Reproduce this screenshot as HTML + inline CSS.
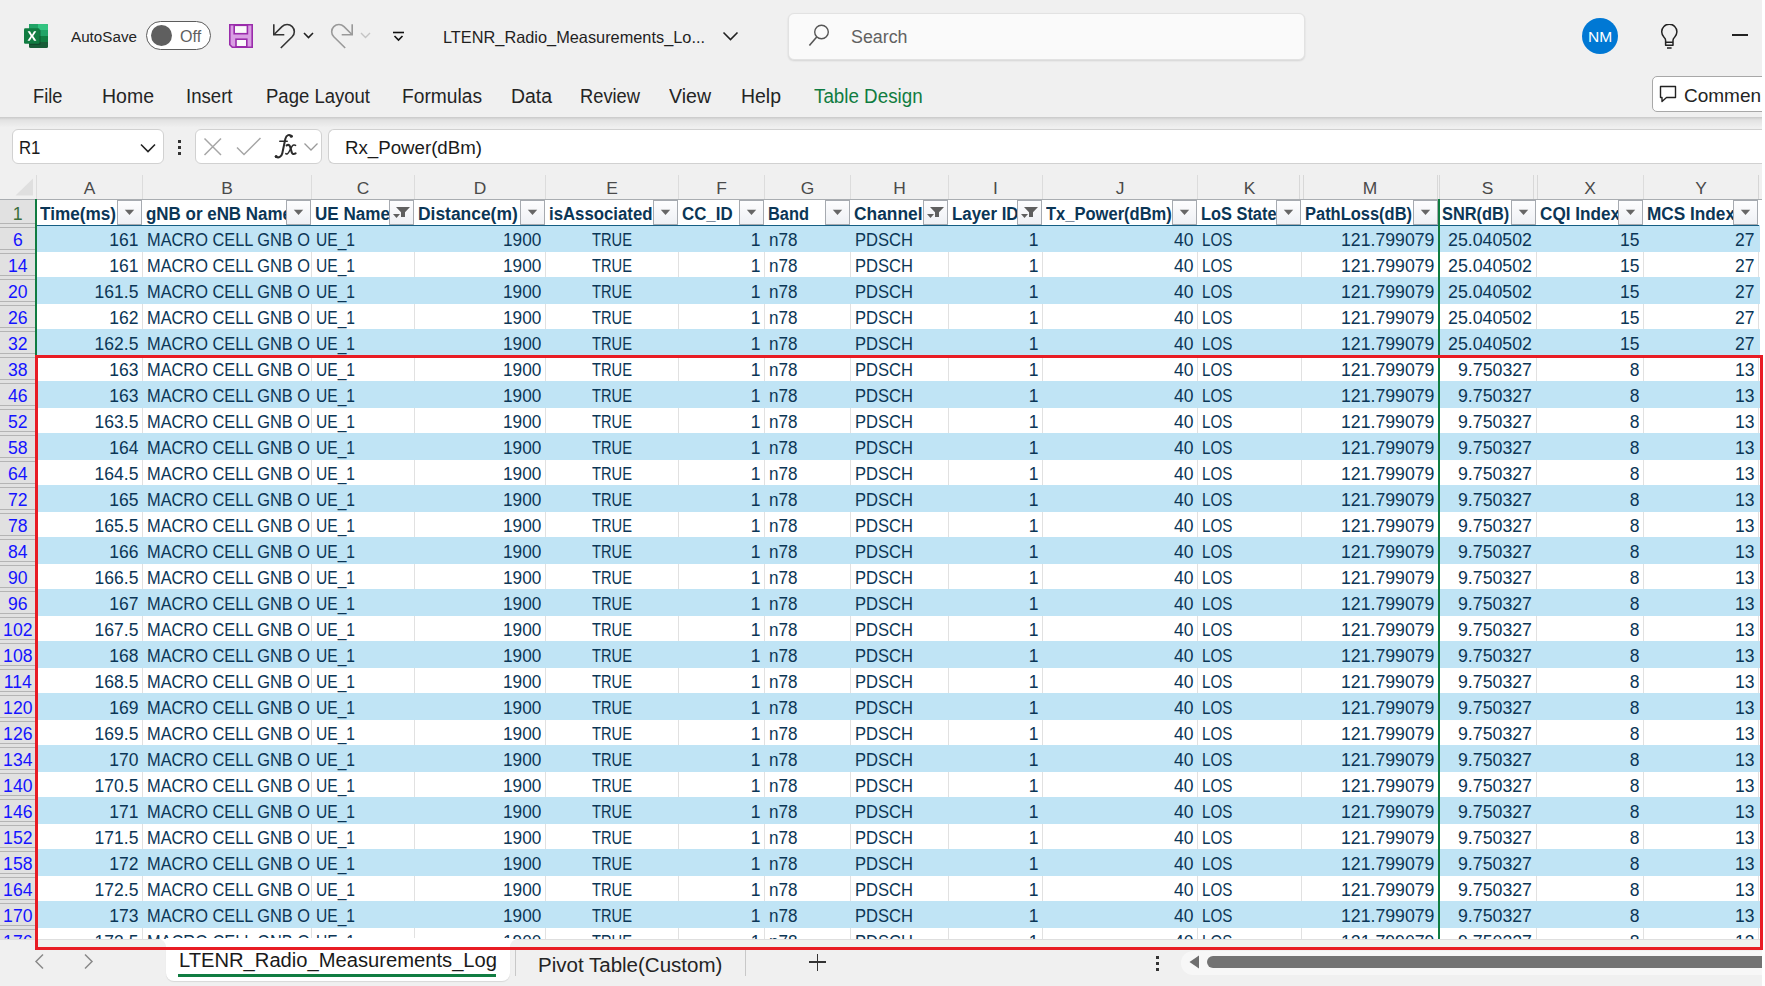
<!DOCTYPE html>
<html><head><meta charset="utf-8"><style>
html,body{margin:0;padding:0;}
body{width:1765px;height:986px;overflow:hidden;position:relative;background:#f0f0f0;font-family:'Liberation Sans', sans-serif;}
div{box-sizing:border-box;}
</style></head><body>
<div style="position:absolute;left:1762px;top:0;width:3px;height:986px;background:#fff"></div><svg style="position:absolute;left:24px;top:24px" width="24" height="24" viewBox="0 0 24 24">
<rect x="5" y="0" width="19" height="24" rx="1.5" fill="#185c37"/>
<path d="M5 0h17.5a1.5 1.5 0 0 1 1.5 1.5V6H5z" fill="#21a366"/>
<path d="M14 0h8.5A1.5 1.5 0 0 1 24 1.5V6H14z" fill="#33c481"/>
<rect x="5" y="6" width="19" height="6" fill="#107c41"/>
<rect x="14" y="6" width="10" height="6" fill="#21a366"/>
<rect x="5" y="12" width="19" height="6" fill="#185c37"/>
<rect x="14" y="12" width="10" height="6" fill="#107c41"/>
<rect x="5" y="5.5" width="11.5" height="15.5" rx="1.3" fill="#0b3d22" opacity="0.55"/>
<rect x="0" y="4.2" width="15.5" height="15.5" rx="1.3" fill="#107c41"/>
<path d="M3.6 7.2h2.4l2 3.5 2-3.5h2.3l-3.1 4.7 3.2 4.8h-2.4l-2.1-3.5-2.1 3.5H3.5l3.2-4.8z" fill="#fff"/>
</svg><div style="position:absolute;left:71.00px;top:29.38px;font-size:15.5px;line-height:15.5px;font-weight:400;color:#242424;white-space:pre;transform:scaleX(0.9819);transform-origin:0 0;">AutoSave</div><div style="position:absolute;left:146px;top:21px;width:65px;height:29px;border:1px solid #5c5c5c;border-radius:15px;background:#fff"></div><div style="position:absolute;left:151px;top:25px;width:21px;height:21px;border-radius:50%;background:#5f5f5f"></div><div style="position:absolute;left:179.50px;top:28.96px;font-size:16px;line-height:16px;font-weight:400;color:#5f5f5f;white-space:pre;transform:scaleX(1.0073);transform-origin:0 0;">Off</div><svg style="position:absolute;left:229px;top:24px" width="24" height="24" viewBox="0 0 24 24">
<path d="M0.8 0.8h22.4v22.4H3.3L0.8 20.7z" fill="#d99ee3" stroke="#9a2cab" stroke-width="1.6"/>
<rect x="5.2" y="1.3" width="13.2" height="8.4" fill="#fafafa" stroke="#9a2cab" stroke-width="1.6"/>
<rect x="7" y="15.2" width="10.8" height="7.6" fill="#fafafa" stroke="#9a2cab" stroke-width="1.6"/>
</svg><svg style="position:absolute;left:272px;top:23px" width="26" height="26" viewBox="0 0 26 26">
<path d="M1.8 1.2v10.5h10.5" fill="none" stroke="#333" stroke-width="1.6"/>
<path d="M2.3 11.2 L10 3.6 a7.2 7.2 0 0 1 10.2 10.2 L8.8 25" fill="none" stroke="#333" stroke-width="1.6"/>
</svg><svg style="position:absolute;left:303px;top:32px" width="11" height="7" viewBox="0 0 11 7"><path d="M1 1l4.5 4.5L10 1" fill="none" stroke="#222" stroke-width="1.6"/></svg><svg style="position:absolute;left:327.5px;top:23px" width="26" height="26" viewBox="0 0 26 26">
<path d="M24.2 1.2v10.5H13.7" fill="none" stroke="#999" stroke-width="1.6"/>
<path d="M23.7 11.2 L16 3.6 a7.2 7.2 0 0 0 -10.2 10.2 L17.2 25" fill="none" stroke="#999" stroke-width="1.6"/>
</svg><svg style="position:absolute;left:360px;top:32px" width="11" height="7" viewBox="0 0 11 7"><path d="M1 1l4.5 4.5L10 1" fill="none" stroke="#c4c4c4" stroke-width="1.4"/></svg><svg style="position:absolute;left:392px;top:31px" width="13" height="11" viewBox="0 0 13 11"><path d="M1 1.5h11" stroke="#111" stroke-width="1.6"/><path d="M2.5 5l4 4 4-4" fill="none" stroke="#111" stroke-width="1.6"/></svg><div style="position:absolute;left:443.00px;top:29.03px;font-size:16.5px;line-height:16.5px;font-weight:400;color:#1f1f1f;white-space:pre;transform:scaleX(0.9896);transform-origin:0 0;">LTENR_Radio_Measurements_Lo...</div><svg style="position:absolute;left:722px;top:31px" width="17" height="11" viewBox="0 0 17 11"><path d="M1.5 1.5l7 7 7-7" fill="none" stroke="#222" stroke-width="1.6"/></svg><div style="position:absolute;left:788px;top:13px;width:517px;height:47px;background:#fafafa;border:1px solid #e2e2e2;border-radius:6px;box-shadow:0 1px 2px rgba(0,0,0,0.12)"></div><svg style="position:absolute;left:808px;top:23px" width="22" height="24" viewBox="0 0 22 24"><circle cx="13.5" cy="9" r="6.8" fill="none" stroke="#555" stroke-width="1.4"/><path d="M8.7 14l-7.3 8.5" stroke="#555" stroke-width="1.6"/></svg><div style="position:absolute;left:850.50px;top:29.19px;font-size:17.5px;line-height:17.5px;font-weight:400;color:#616161;white-space:pre;transform:scaleX(1.0189);transform-origin:0 0;">Search</div><div style="position:absolute;left:1582px;top:18px;width:36px;height:36px;border-radius:50%;background:#0078d4"></div><div style="position:absolute;left:1588.20px;top:29.15px;font-size:15.3px;line-height:15.3px;font-weight:400;color:#ffffff;white-space:pre;transform:scaleX(1.0169);transform-origin:0 0;">NM</div><svg style="position:absolute;left:1658px;top:24px" width="22" height="26" viewBox="0 0 22 26">
<path d="M7.6 21.2V16.2c0-1-.5-1.9-1.6-3a7.6 7.6 0 1 1 10.6 0c-1.1 1.1-1.6 2-1.6 3v5z" fill="none" stroke="#222" stroke-width="1.5" stroke-linejoin="round"/>
<path d="M7.6 18.2h7.4M9 24h4.6" stroke="#222" stroke-width="1.5"/></svg><div style="position:absolute;left:1732px;top:34px;width:16px;height:2px;background:#222"></div><div style="position:absolute;left:32.50px;top:86.37px;font-size:20px;line-height:20px;font-weight:400;color:#242424;white-space:pre;transform:scaleX(0.9121);transform-origin:0 0;">File</div><div style="position:absolute;left:101.60px;top:86.37px;font-size:20px;line-height:20px;font-weight:400;color:#242424;white-space:pre;transform:scaleX(0.9745);transform-origin:0 0;">Home</div><div style="position:absolute;left:185.50px;top:86.37px;font-size:20px;line-height:20px;font-weight:400;color:#242424;white-space:pre;transform:scaleX(0.9294);transform-origin:0 0;">Insert</div><div style="position:absolute;left:266.00px;top:86.37px;font-size:20px;line-height:20px;font-weight:400;color:#242424;white-space:pre;transform:scaleX(0.9259);transform-origin:0 0;">Page Layout</div><div style="position:absolute;left:402.00px;top:86.37px;font-size:20px;line-height:20px;font-weight:400;color:#242424;white-space:pre;transform:scaleX(0.9597);transform-origin:0 0;">Formulas</div><div style="position:absolute;left:511.00px;top:86.37px;font-size:20px;line-height:20px;font-weight:400;color:#242424;white-space:pre;transform:scaleX(0.9704);transform-origin:0 0;">Data</div><div style="position:absolute;left:580.00px;top:86.37px;font-size:20px;line-height:20px;font-weight:400;color:#242424;white-space:pre;transform:scaleX(0.9149);transform-origin:0 0;">Review</div><div style="position:absolute;left:669.00px;top:86.37px;font-size:20px;line-height:20px;font-weight:400;color:#242424;white-space:pre;transform:scaleX(0.9767);transform-origin:0 0;">View</div><div style="position:absolute;left:741.00px;top:86.37px;font-size:20px;line-height:20px;font-weight:400;color:#242424;white-space:pre;transform:scaleX(0.9723);transform-origin:0 0;">Help</div><div style="position:absolute;left:813.60px;top:86.37px;font-size:20px;line-height:20px;font-weight:400;color:#107c41;white-space:pre;transform:scaleX(0.9392);transform-origin:0 0;">Table Design</div><div style="position:absolute;left:1652px;top:76px;width:120px;height:36px;background:#fff;border:1px solid #a8a8a8;border-radius:5px"></div><svg style="position:absolute;left:1658px;top:84px" width="20" height="20" viewBox="0 0 20 20"><path d="M2.5 2.5h15v11H8.5l-4.5 4v-4H2.5z" fill="none" stroke="#222" stroke-width="1.4" stroke-linejoin="round"/></svg><div style="position:absolute;left:1652px;top:0;width:109px;height:986px;overflow:hidden"><div style="position:absolute;left:-1652px;top:0"><div style="position:absolute;left:1684.00px;top:85.72px;font-size:19px;line-height:19px;font-weight:400;color:#242424;white-space:pre;">Comments</div></div></div><div style="position:absolute;left:0px;top:117px;width:1762px;height:10px;background:linear-gradient(#c9c9c9,#e2e2e2 30%,#e8e8e8 60%,#efefef)"></div><div style="position:absolute;left:12px;top:129px;width:152px;height:35px;background:#fff;border:1px solid #d1d1d1;border-radius:6px"></div><div style="position:absolute;left:19.40px;top:138.76px;font-size:18px;line-height:18px;font-weight:400;color:#1a1a1a;white-space:pre;transform:scaleX(0.9298);transform-origin:0 0;">R1</div><svg style="position:absolute;left:140px;top:143px" width="16" height="10" viewBox="0 0 16 10"><path d="M1 1.5l7 7 7-7" fill="none" stroke="#222" stroke-width="1.6"/></svg><div style="position:absolute;left:177.5px;top:140px;width:3px;height:3px;background:#333"></div><div style="position:absolute;left:177.5px;top:146px;width:3px;height:3px;background:#333"></div><div style="position:absolute;left:177.5px;top:152px;width:3px;height:3px;background:#333"></div><div style="position:absolute;left:195px;top:129px;width:127px;height:35px;background:#fff;border:1px solid #d1d1d1;border-radius:6px"></div><svg style="position:absolute;left:203px;top:137px" width="20" height="19" viewBox="0 0 20 19"><path d="M1.5 1.5l16.5 16.5M18 1.5L1.5 18" stroke="#a6a6a6" stroke-width="1.5"/></svg><svg style="position:absolute;left:236px;top:137px" width="26" height="19" viewBox="0 0 26 19"><path d="M1 10.5l7 7L24.5 1" fill="none" stroke="#a6a6a6" stroke-width="1.5"/></svg><svg style="position:absolute;left:270px;top:130px" width="30" height="32" viewBox="0 0 30 32">
<g fill="none" stroke="#2b2b2b" stroke-linecap="round">
<path d="M21.8 6.2C19.6 3.9 16.4 4.6 15.3 9L12.3 23.3C11.6 26.8 8.6 28.4 5.8 26.6" stroke-width="2"/>
<path d="M9.8 11.3H17.2" stroke-width="1.6"/>
<path d="M16.6 15.4C18.3 14.3 19.6 15 20.2 17L21.7 22.2C22.2 24 23.6 24.6 25.6 23.4" stroke-width="2.1"/>
<path d="M25.6 15.4C24.6 14.6 23 14.8 22 16.3L18.9 22C18 23.7 16.8 24.4 15.8 23.6" stroke-width="1.5"/>
</g>
<circle cx="21.2" cy="6.3" r="1.5" fill="#2b2b2b"/><circle cx="6.2" cy="26.4" r="1.5" fill="#2b2b2b"/>
</svg><svg style="position:absolute;left:303px;top:142px" width="16" height="10" viewBox="0 0 16 10"><path d="M1.5 1.5l6.5 6.5 6.5-6.5" fill="none" stroke="#9a9a9a" stroke-width="1.3"/></svg><div style="position:absolute;left:328px;top:129px;width:1440px;height:35px;background:#fff;border:1px solid #d1d1d1;border-right:none;border-radius:6px 0 0 6px"></div><div style="position:absolute;left:344.70px;top:138.76px;font-size:18px;line-height:18px;font-weight:400;color:#1a1a1a;white-space:pre;transform:scaleX(1.0376);transform-origin:0 0;">Rx_Power(dBm)</div><div style="position:absolute;left:36px;top:200px;width:1726px;height:739px;background:#fff"></div><div style="position:absolute;left:36px;top:175px;width:1px;height:24px;background:#dcdcdc"></div><div style="position:absolute;left:83.70px;top:180.07px;font-size:17.4px;line-height:17.4px;font-weight:400;color:#4a4a4a;white-space:pre;">A</div><div style="position:absolute;left:142px;top:175px;width:1px;height:24px;background:#dcdcdc"></div><div style="position:absolute;left:221.20px;top:180.07px;font-size:17.4px;line-height:17.4px;font-weight:400;color:#4a4a4a;white-space:pre;">B</div><div style="position:absolute;left:311px;top:175px;width:1px;height:24px;background:#dcdcdc"></div><div style="position:absolute;left:356.72px;top:180.07px;font-size:17.4px;line-height:17.4px;font-weight:400;color:#4a4a4a;white-space:pre;">C</div><div style="position:absolute;left:414px;top:175px;width:1px;height:24px;background:#dcdcdc"></div><div style="position:absolute;left:473.72px;top:180.07px;font-size:17.4px;line-height:17.4px;font-weight:400;color:#4a4a4a;white-space:pre;">D</div><div style="position:absolute;left:545px;top:175px;width:1px;height:24px;background:#dcdcdc"></div><div style="position:absolute;left:606.20px;top:180.07px;font-size:17.4px;line-height:17.4px;font-weight:400;color:#4a4a4a;white-space:pre;">E</div><div style="position:absolute;left:678px;top:175px;width:1px;height:24px;background:#dcdcdc"></div><div style="position:absolute;left:716.19px;top:180.07px;font-size:17.4px;line-height:17.4px;font-weight:400;color:#4a4a4a;white-space:pre;">F</div><div style="position:absolute;left:764px;top:175px;width:1px;height:24px;background:#dcdcdc"></div><div style="position:absolute;left:800.73px;top:180.07px;font-size:17.4px;line-height:17.4px;font-weight:400;color:#4a4a4a;white-space:pre;">G</div><div style="position:absolute;left:850px;top:175px;width:1px;height:24px;background:#dcdcdc"></div><div style="position:absolute;left:893.22px;top:180.07px;font-size:17.4px;line-height:17.4px;font-weight:400;color:#4a4a4a;white-space:pre;">H</div><div style="position:absolute;left:948px;top:175px;width:1px;height:24px;background:#dcdcdc"></div><div style="position:absolute;left:993.08px;top:180.07px;font-size:17.4px;line-height:17.4px;font-weight:400;color:#4a4a4a;white-space:pre;">I</div><div style="position:absolute;left:1042px;top:175px;width:1px;height:24px;background:#dcdcdc"></div><div style="position:absolute;left:1115.65px;top:180.07px;font-size:17.4px;line-height:17.4px;font-weight:400;color:#4a4a4a;white-space:pre;">J</div><div style="position:absolute;left:1197px;top:175px;width:1px;height:24px;background:#dcdcdc"></div><div style="position:absolute;left:1243.70px;top:180.07px;font-size:17.4px;line-height:17.4px;font-weight:400;color:#4a4a4a;white-space:pre;">K</div><div style="position:absolute;left:1362.75px;top:180.07px;font-size:17.4px;line-height:17.4px;font-weight:400;color:#4a4a4a;white-space:pre;">M</div><div style="position:absolute;left:1481.70px;top:180.07px;font-size:17.4px;line-height:17.4px;font-weight:400;color:#4a4a4a;white-space:pre;">S</div><div style="position:absolute;left:1584.20px;top:180.07px;font-size:17.4px;line-height:17.4px;font-weight:400;color:#4a4a4a;white-space:pre;">X</div><div style="position:absolute;left:1643px;top:175px;width:1px;height:24px;background:#dcdcdc"></div><div style="position:absolute;left:1695.20px;top:180.07px;font-size:17.4px;line-height:17.4px;font-weight:400;color:#4a4a4a;white-space:pre;">Y</div><div style="position:absolute;left:1758px;top:175px;width:1px;height:24px;background:#d6d6d6"></div><div style="position:absolute;left:1299px;top:175px;width:1px;height:24px;background:#d8d8d8"></div><div style="position:absolute;left:1303px;top:175px;width:1px;height:24px;background:#d8d8d8"></div><div style="position:absolute;left:1437px;top:175px;width:1px;height:24px;background:#d8d8d8"></div><div style="position:absolute;left:1439px;top:175px;width:1px;height:24px;background:#d8d8d8"></div><div style="position:absolute;left:1533px;top:175px;width:1px;height:24px;background:#d8d8d8"></div><div style="position:absolute;left:1537px;top:175px;width:1px;height:24px;background:#d8d8d8"></div><div style="position:absolute;left:0px;top:199px;width:1762px;height:1px;background:#a9adb1"></div><svg style="position:absolute;left:15px;top:178px" width="19" height="18" viewBox="0 0 19 18"><path d="M18 0.5V17.5H0.5z" fill="#dfdfdf"/></svg><div style="position:absolute;left:0px;top:200px;width:35px;height:739px;background:#e1e1e1"></div><div style="position:absolute;left:12.65px;top:205.93px;font-size:17.8px;line-height:17.8px;font-weight:400;color:#3b6e3b;white-space:pre;">1</div><div style="position:absolute;left:0px;top:223px;width:35px;height:1px;background:#b4b4b4"></div><div style="position:absolute;left:0px;top:227px;width:35px;height:1px;background:#b4b4b4"></div><div style="position:absolute;left:12.90px;top:232.10px;font-size:17.6px;line-height:17.6px;font-weight:400;color:#1414ff;white-space:pre;">6</div><div style="position:absolute;left:0px;top:249px;width:35px;height:1px;background:#b4b4b4"></div><div style="position:absolute;left:0px;top:253px;width:35px;height:1px;background:#b4b4b4"></div><div style="position:absolute;left:8.01px;top:258.10px;font-size:17.6px;line-height:17.6px;font-weight:400;color:#1414ff;white-space:pre;">14</div><div style="position:absolute;left:0px;top:275px;width:35px;height:1px;background:#b4b4b4"></div><div style="position:absolute;left:0px;top:279px;width:35px;height:1px;background:#b4b4b4"></div><div style="position:absolute;left:8.01px;top:284.10px;font-size:17.6px;line-height:17.6px;font-weight:400;color:#1414ff;white-space:pre;">20</div><div style="position:absolute;left:0px;top:301px;width:35px;height:1px;background:#b4b4b4"></div><div style="position:absolute;left:0px;top:305px;width:35px;height:1px;background:#b4b4b4"></div><div style="position:absolute;left:8.01px;top:310.10px;font-size:17.6px;line-height:17.6px;font-weight:400;color:#1414ff;white-space:pre;">26</div><div style="position:absolute;left:0px;top:327px;width:35px;height:1px;background:#b4b4b4"></div><div style="position:absolute;left:0px;top:331px;width:35px;height:1px;background:#b4b4b4"></div><div style="position:absolute;left:8.01px;top:336.10px;font-size:17.6px;line-height:17.6px;font-weight:400;color:#1414ff;white-space:pre;">32</div><div style="position:absolute;left:0px;top:353px;width:35px;height:1px;background:#b4b4b4"></div><div style="position:absolute;left:0px;top:357px;width:35px;height:1px;background:#b4b4b4"></div><div style="position:absolute;left:8.01px;top:362.10px;font-size:17.6px;line-height:17.6px;font-weight:400;color:#1414ff;white-space:pre;">38</div><div style="position:absolute;left:0px;top:379px;width:35px;height:1px;background:#b4b4b4"></div><div style="position:absolute;left:0px;top:383px;width:35px;height:1px;background:#b4b4b4"></div><div style="position:absolute;left:8.01px;top:388.10px;font-size:17.6px;line-height:17.6px;font-weight:400;color:#1414ff;white-space:pre;">46</div><div style="position:absolute;left:0px;top:405px;width:35px;height:1px;background:#b4b4b4"></div><div style="position:absolute;left:0px;top:409px;width:35px;height:1px;background:#b4b4b4"></div><div style="position:absolute;left:8.01px;top:414.10px;font-size:17.6px;line-height:17.6px;font-weight:400;color:#1414ff;white-space:pre;">52</div><div style="position:absolute;left:0px;top:431px;width:35px;height:1px;background:#b4b4b4"></div><div style="position:absolute;left:0px;top:435px;width:35px;height:1px;background:#b4b4b4"></div><div style="position:absolute;left:8.01px;top:440.10px;font-size:17.6px;line-height:17.6px;font-weight:400;color:#1414ff;white-space:pre;">58</div><div style="position:absolute;left:0px;top:457px;width:35px;height:1px;background:#b4b4b4"></div><div style="position:absolute;left:0px;top:461px;width:35px;height:1px;background:#b4b4b4"></div><div style="position:absolute;left:8.01px;top:466.10px;font-size:17.6px;line-height:17.6px;font-weight:400;color:#1414ff;white-space:pre;">64</div><div style="position:absolute;left:0px;top:483px;width:35px;height:1px;background:#b4b4b4"></div><div style="position:absolute;left:0px;top:487px;width:35px;height:1px;background:#b4b4b4"></div><div style="position:absolute;left:8.01px;top:492.10px;font-size:17.6px;line-height:17.6px;font-weight:400;color:#1414ff;white-space:pre;">72</div><div style="position:absolute;left:0px;top:509px;width:35px;height:1px;background:#b4b4b4"></div><div style="position:absolute;left:0px;top:513px;width:35px;height:1px;background:#b4b4b4"></div><div style="position:absolute;left:8.01px;top:518.10px;font-size:17.6px;line-height:17.6px;font-weight:400;color:#1414ff;white-space:pre;">78</div><div style="position:absolute;left:0px;top:535px;width:35px;height:1px;background:#b4b4b4"></div><div style="position:absolute;left:0px;top:539px;width:35px;height:1px;background:#b4b4b4"></div><div style="position:absolute;left:8.01px;top:544.10px;font-size:17.6px;line-height:17.6px;font-weight:400;color:#1414ff;white-space:pre;">84</div><div style="position:absolute;left:0px;top:561px;width:35px;height:1px;background:#b4b4b4"></div><div style="position:absolute;left:0px;top:565px;width:35px;height:1px;background:#b4b4b4"></div><div style="position:absolute;left:8.01px;top:570.10px;font-size:17.6px;line-height:17.6px;font-weight:400;color:#1414ff;white-space:pre;">90</div><div style="position:absolute;left:0px;top:587px;width:35px;height:1px;background:#b4b4b4"></div><div style="position:absolute;left:0px;top:591px;width:35px;height:1px;background:#b4b4b4"></div><div style="position:absolute;left:8.01px;top:596.10px;font-size:17.6px;line-height:17.6px;font-weight:400;color:#1414ff;white-space:pre;">96</div><div style="position:absolute;left:0px;top:613px;width:35px;height:1px;background:#b4b4b4"></div><div style="position:absolute;left:0px;top:617px;width:35px;height:1px;background:#b4b4b4"></div><div style="position:absolute;left:3.12px;top:622.10px;font-size:17.6px;line-height:17.6px;font-weight:400;color:#1414ff;white-space:pre;">102</div><div style="position:absolute;left:0px;top:639px;width:35px;height:1px;background:#b4b4b4"></div><div style="position:absolute;left:0px;top:643px;width:35px;height:1px;background:#b4b4b4"></div><div style="position:absolute;left:3.12px;top:648.10px;font-size:17.6px;line-height:17.6px;font-weight:400;color:#1414ff;white-space:pre;">108</div><div style="position:absolute;left:0px;top:665px;width:35px;height:1px;background:#b4b4b4"></div><div style="position:absolute;left:0px;top:669px;width:35px;height:1px;background:#b4b4b4"></div><div style="position:absolute;left:3.77px;top:674.10px;font-size:17.6px;line-height:17.6px;font-weight:400;color:#1414ff;white-space:pre;">114</div><div style="position:absolute;left:0px;top:691px;width:35px;height:1px;background:#b4b4b4"></div><div style="position:absolute;left:0px;top:695px;width:35px;height:1px;background:#b4b4b4"></div><div style="position:absolute;left:3.12px;top:700.10px;font-size:17.6px;line-height:17.6px;font-weight:400;color:#1414ff;white-space:pre;">120</div><div style="position:absolute;left:0px;top:717px;width:35px;height:1px;background:#b4b4b4"></div><div style="position:absolute;left:0px;top:721px;width:35px;height:1px;background:#b4b4b4"></div><div style="position:absolute;left:3.12px;top:726.10px;font-size:17.6px;line-height:17.6px;font-weight:400;color:#1414ff;white-space:pre;">126</div><div style="position:absolute;left:0px;top:743px;width:35px;height:1px;background:#b4b4b4"></div><div style="position:absolute;left:0px;top:747px;width:35px;height:1px;background:#b4b4b4"></div><div style="position:absolute;left:3.12px;top:752.10px;font-size:17.6px;line-height:17.6px;font-weight:400;color:#1414ff;white-space:pre;">134</div><div style="position:absolute;left:0px;top:769px;width:35px;height:1px;background:#b4b4b4"></div><div style="position:absolute;left:0px;top:773px;width:35px;height:1px;background:#b4b4b4"></div><div style="position:absolute;left:3.12px;top:778.10px;font-size:17.6px;line-height:17.6px;font-weight:400;color:#1414ff;white-space:pre;">140</div><div style="position:absolute;left:0px;top:795px;width:35px;height:1px;background:#b4b4b4"></div><div style="position:absolute;left:0px;top:799px;width:35px;height:1px;background:#b4b4b4"></div><div style="position:absolute;left:3.12px;top:804.10px;font-size:17.6px;line-height:17.6px;font-weight:400;color:#1414ff;white-space:pre;">146</div><div style="position:absolute;left:0px;top:821px;width:35px;height:1px;background:#b4b4b4"></div><div style="position:absolute;left:0px;top:825px;width:35px;height:1px;background:#b4b4b4"></div><div style="position:absolute;left:3.12px;top:830.10px;font-size:17.6px;line-height:17.6px;font-weight:400;color:#1414ff;white-space:pre;">152</div><div style="position:absolute;left:0px;top:847px;width:35px;height:1px;background:#b4b4b4"></div><div style="position:absolute;left:0px;top:851px;width:35px;height:1px;background:#b4b4b4"></div><div style="position:absolute;left:3.12px;top:856.10px;font-size:17.6px;line-height:17.6px;font-weight:400;color:#1414ff;white-space:pre;">158</div><div style="position:absolute;left:0px;top:873px;width:35px;height:1px;background:#b4b4b4"></div><div style="position:absolute;left:0px;top:877px;width:35px;height:1px;background:#b4b4b4"></div><div style="position:absolute;left:3.12px;top:882.10px;font-size:17.6px;line-height:17.6px;font-weight:400;color:#1414ff;white-space:pre;">164</div><div style="position:absolute;left:0px;top:899px;width:35px;height:1px;background:#b4b4b4"></div><div style="position:absolute;left:0px;top:903px;width:35px;height:1px;background:#b4b4b4"></div><div style="position:absolute;left:3.12px;top:908.10px;font-size:17.6px;line-height:17.6px;font-weight:400;color:#1414ff;white-space:pre;">170</div><div style="position:absolute;left:0px;top:925px;width:35px;height:1px;background:#b4b4b4"></div><div style="position:absolute;left:0px;top:929px;width:35px;height:1px;background:#b4b4b4"></div><div style="position:absolute;left:3.12px;top:934.10px;font-size:17.6px;line-height:17.6px;font-weight:400;color:#1414ff;white-space:pre;">176</div><div style="position:absolute;left:37px;top:225px;width:1723px;height:27px;background:#c0e4f5"></div><div style="position:absolute;left:142px;top:252px;width:1px;height:25px;background:#e1e1e1"></div><div style="position:absolute;left:311px;top:252px;width:1px;height:25px;background:#e1e1e1"></div><div style="position:absolute;left:414px;top:252px;width:1px;height:25px;background:#e1e1e1"></div><div style="position:absolute;left:545px;top:252px;width:1px;height:25px;background:#e1e1e1"></div><div style="position:absolute;left:678px;top:252px;width:1px;height:25px;background:#e1e1e1"></div><div style="position:absolute;left:764px;top:252px;width:1px;height:25px;background:#e1e1e1"></div><div style="position:absolute;left:850px;top:252px;width:1px;height:25px;background:#e1e1e1"></div><div style="position:absolute;left:948px;top:252px;width:1px;height:25px;background:#e1e1e1"></div><div style="position:absolute;left:1042px;top:252px;width:1px;height:25px;background:#e1e1e1"></div><div style="position:absolute;left:1197px;top:252px;width:1px;height:25px;background:#e1e1e1"></div><div style="position:absolute;left:1301px;top:252px;width:1px;height:25px;background:#e1e1e1"></div><div style="position:absolute;left:1438px;top:252px;width:1px;height:25px;background:#e1e1e1"></div><div style="position:absolute;left:1536px;top:252px;width:1px;height:25px;background:#e1e1e1"></div><div style="position:absolute;left:1643px;top:252px;width:1px;height:25px;background:#e1e1e1"></div><div style="position:absolute;left:1758px;top:252px;width:1px;height:25px;background:#e1e1e1"></div><div style="position:absolute;left:37px;top:277px;width:1723px;height:27px;background:#c0e4f5"></div><div style="position:absolute;left:142px;top:304px;width:1px;height:25px;background:#e1e1e1"></div><div style="position:absolute;left:311px;top:304px;width:1px;height:25px;background:#e1e1e1"></div><div style="position:absolute;left:414px;top:304px;width:1px;height:25px;background:#e1e1e1"></div><div style="position:absolute;left:545px;top:304px;width:1px;height:25px;background:#e1e1e1"></div><div style="position:absolute;left:678px;top:304px;width:1px;height:25px;background:#e1e1e1"></div><div style="position:absolute;left:764px;top:304px;width:1px;height:25px;background:#e1e1e1"></div><div style="position:absolute;left:850px;top:304px;width:1px;height:25px;background:#e1e1e1"></div><div style="position:absolute;left:948px;top:304px;width:1px;height:25px;background:#e1e1e1"></div><div style="position:absolute;left:1042px;top:304px;width:1px;height:25px;background:#e1e1e1"></div><div style="position:absolute;left:1197px;top:304px;width:1px;height:25px;background:#e1e1e1"></div><div style="position:absolute;left:1301px;top:304px;width:1px;height:25px;background:#e1e1e1"></div><div style="position:absolute;left:1438px;top:304px;width:1px;height:25px;background:#e1e1e1"></div><div style="position:absolute;left:1536px;top:304px;width:1px;height:25px;background:#e1e1e1"></div><div style="position:absolute;left:1643px;top:304px;width:1px;height:25px;background:#e1e1e1"></div><div style="position:absolute;left:1758px;top:304px;width:1px;height:25px;background:#e1e1e1"></div><div style="position:absolute;left:37px;top:329px;width:1723px;height:27px;background:#c0e4f5"></div><div style="position:absolute;left:142px;top:356px;width:1px;height:25px;background:#e1e1e1"></div><div style="position:absolute;left:311px;top:356px;width:1px;height:25px;background:#e1e1e1"></div><div style="position:absolute;left:414px;top:356px;width:1px;height:25px;background:#e1e1e1"></div><div style="position:absolute;left:545px;top:356px;width:1px;height:25px;background:#e1e1e1"></div><div style="position:absolute;left:678px;top:356px;width:1px;height:25px;background:#e1e1e1"></div><div style="position:absolute;left:764px;top:356px;width:1px;height:25px;background:#e1e1e1"></div><div style="position:absolute;left:850px;top:356px;width:1px;height:25px;background:#e1e1e1"></div><div style="position:absolute;left:948px;top:356px;width:1px;height:25px;background:#e1e1e1"></div><div style="position:absolute;left:1042px;top:356px;width:1px;height:25px;background:#e1e1e1"></div><div style="position:absolute;left:1197px;top:356px;width:1px;height:25px;background:#e1e1e1"></div><div style="position:absolute;left:1301px;top:356px;width:1px;height:25px;background:#e1e1e1"></div><div style="position:absolute;left:1438px;top:356px;width:1px;height:25px;background:#e1e1e1"></div><div style="position:absolute;left:1536px;top:356px;width:1px;height:25px;background:#e1e1e1"></div><div style="position:absolute;left:1643px;top:356px;width:1px;height:25px;background:#e1e1e1"></div><div style="position:absolute;left:1758px;top:356px;width:1px;height:25px;background:#e1e1e1"></div><div style="position:absolute;left:37px;top:381px;width:1723px;height:27px;background:#c0e4f5"></div><div style="position:absolute;left:142px;top:408px;width:1px;height:25px;background:#e1e1e1"></div><div style="position:absolute;left:311px;top:408px;width:1px;height:25px;background:#e1e1e1"></div><div style="position:absolute;left:414px;top:408px;width:1px;height:25px;background:#e1e1e1"></div><div style="position:absolute;left:545px;top:408px;width:1px;height:25px;background:#e1e1e1"></div><div style="position:absolute;left:678px;top:408px;width:1px;height:25px;background:#e1e1e1"></div><div style="position:absolute;left:764px;top:408px;width:1px;height:25px;background:#e1e1e1"></div><div style="position:absolute;left:850px;top:408px;width:1px;height:25px;background:#e1e1e1"></div><div style="position:absolute;left:948px;top:408px;width:1px;height:25px;background:#e1e1e1"></div><div style="position:absolute;left:1042px;top:408px;width:1px;height:25px;background:#e1e1e1"></div><div style="position:absolute;left:1197px;top:408px;width:1px;height:25px;background:#e1e1e1"></div><div style="position:absolute;left:1301px;top:408px;width:1px;height:25px;background:#e1e1e1"></div><div style="position:absolute;left:1438px;top:408px;width:1px;height:25px;background:#e1e1e1"></div><div style="position:absolute;left:1536px;top:408px;width:1px;height:25px;background:#e1e1e1"></div><div style="position:absolute;left:1643px;top:408px;width:1px;height:25px;background:#e1e1e1"></div><div style="position:absolute;left:1758px;top:408px;width:1px;height:25px;background:#e1e1e1"></div><div style="position:absolute;left:37px;top:433px;width:1723px;height:27px;background:#c0e4f5"></div><div style="position:absolute;left:142px;top:460px;width:1px;height:25px;background:#e1e1e1"></div><div style="position:absolute;left:311px;top:460px;width:1px;height:25px;background:#e1e1e1"></div><div style="position:absolute;left:414px;top:460px;width:1px;height:25px;background:#e1e1e1"></div><div style="position:absolute;left:545px;top:460px;width:1px;height:25px;background:#e1e1e1"></div><div style="position:absolute;left:678px;top:460px;width:1px;height:25px;background:#e1e1e1"></div><div style="position:absolute;left:764px;top:460px;width:1px;height:25px;background:#e1e1e1"></div><div style="position:absolute;left:850px;top:460px;width:1px;height:25px;background:#e1e1e1"></div><div style="position:absolute;left:948px;top:460px;width:1px;height:25px;background:#e1e1e1"></div><div style="position:absolute;left:1042px;top:460px;width:1px;height:25px;background:#e1e1e1"></div><div style="position:absolute;left:1197px;top:460px;width:1px;height:25px;background:#e1e1e1"></div><div style="position:absolute;left:1301px;top:460px;width:1px;height:25px;background:#e1e1e1"></div><div style="position:absolute;left:1438px;top:460px;width:1px;height:25px;background:#e1e1e1"></div><div style="position:absolute;left:1536px;top:460px;width:1px;height:25px;background:#e1e1e1"></div><div style="position:absolute;left:1643px;top:460px;width:1px;height:25px;background:#e1e1e1"></div><div style="position:absolute;left:1758px;top:460px;width:1px;height:25px;background:#e1e1e1"></div><div style="position:absolute;left:37px;top:485px;width:1723px;height:27px;background:#c0e4f5"></div><div style="position:absolute;left:142px;top:512px;width:1px;height:25px;background:#e1e1e1"></div><div style="position:absolute;left:311px;top:512px;width:1px;height:25px;background:#e1e1e1"></div><div style="position:absolute;left:414px;top:512px;width:1px;height:25px;background:#e1e1e1"></div><div style="position:absolute;left:545px;top:512px;width:1px;height:25px;background:#e1e1e1"></div><div style="position:absolute;left:678px;top:512px;width:1px;height:25px;background:#e1e1e1"></div><div style="position:absolute;left:764px;top:512px;width:1px;height:25px;background:#e1e1e1"></div><div style="position:absolute;left:850px;top:512px;width:1px;height:25px;background:#e1e1e1"></div><div style="position:absolute;left:948px;top:512px;width:1px;height:25px;background:#e1e1e1"></div><div style="position:absolute;left:1042px;top:512px;width:1px;height:25px;background:#e1e1e1"></div><div style="position:absolute;left:1197px;top:512px;width:1px;height:25px;background:#e1e1e1"></div><div style="position:absolute;left:1301px;top:512px;width:1px;height:25px;background:#e1e1e1"></div><div style="position:absolute;left:1438px;top:512px;width:1px;height:25px;background:#e1e1e1"></div><div style="position:absolute;left:1536px;top:512px;width:1px;height:25px;background:#e1e1e1"></div><div style="position:absolute;left:1643px;top:512px;width:1px;height:25px;background:#e1e1e1"></div><div style="position:absolute;left:1758px;top:512px;width:1px;height:25px;background:#e1e1e1"></div><div style="position:absolute;left:37px;top:537px;width:1723px;height:27px;background:#c0e4f5"></div><div style="position:absolute;left:142px;top:564px;width:1px;height:25px;background:#e1e1e1"></div><div style="position:absolute;left:311px;top:564px;width:1px;height:25px;background:#e1e1e1"></div><div style="position:absolute;left:414px;top:564px;width:1px;height:25px;background:#e1e1e1"></div><div style="position:absolute;left:545px;top:564px;width:1px;height:25px;background:#e1e1e1"></div><div style="position:absolute;left:678px;top:564px;width:1px;height:25px;background:#e1e1e1"></div><div style="position:absolute;left:764px;top:564px;width:1px;height:25px;background:#e1e1e1"></div><div style="position:absolute;left:850px;top:564px;width:1px;height:25px;background:#e1e1e1"></div><div style="position:absolute;left:948px;top:564px;width:1px;height:25px;background:#e1e1e1"></div><div style="position:absolute;left:1042px;top:564px;width:1px;height:25px;background:#e1e1e1"></div><div style="position:absolute;left:1197px;top:564px;width:1px;height:25px;background:#e1e1e1"></div><div style="position:absolute;left:1301px;top:564px;width:1px;height:25px;background:#e1e1e1"></div><div style="position:absolute;left:1438px;top:564px;width:1px;height:25px;background:#e1e1e1"></div><div style="position:absolute;left:1536px;top:564px;width:1px;height:25px;background:#e1e1e1"></div><div style="position:absolute;left:1643px;top:564px;width:1px;height:25px;background:#e1e1e1"></div><div style="position:absolute;left:1758px;top:564px;width:1px;height:25px;background:#e1e1e1"></div><div style="position:absolute;left:37px;top:589px;width:1723px;height:27px;background:#c0e4f5"></div><div style="position:absolute;left:142px;top:616px;width:1px;height:25px;background:#e1e1e1"></div><div style="position:absolute;left:311px;top:616px;width:1px;height:25px;background:#e1e1e1"></div><div style="position:absolute;left:414px;top:616px;width:1px;height:25px;background:#e1e1e1"></div><div style="position:absolute;left:545px;top:616px;width:1px;height:25px;background:#e1e1e1"></div><div style="position:absolute;left:678px;top:616px;width:1px;height:25px;background:#e1e1e1"></div><div style="position:absolute;left:764px;top:616px;width:1px;height:25px;background:#e1e1e1"></div><div style="position:absolute;left:850px;top:616px;width:1px;height:25px;background:#e1e1e1"></div><div style="position:absolute;left:948px;top:616px;width:1px;height:25px;background:#e1e1e1"></div><div style="position:absolute;left:1042px;top:616px;width:1px;height:25px;background:#e1e1e1"></div><div style="position:absolute;left:1197px;top:616px;width:1px;height:25px;background:#e1e1e1"></div><div style="position:absolute;left:1301px;top:616px;width:1px;height:25px;background:#e1e1e1"></div><div style="position:absolute;left:1438px;top:616px;width:1px;height:25px;background:#e1e1e1"></div><div style="position:absolute;left:1536px;top:616px;width:1px;height:25px;background:#e1e1e1"></div><div style="position:absolute;left:1643px;top:616px;width:1px;height:25px;background:#e1e1e1"></div><div style="position:absolute;left:1758px;top:616px;width:1px;height:25px;background:#e1e1e1"></div><div style="position:absolute;left:37px;top:641px;width:1723px;height:27px;background:#c0e4f5"></div><div style="position:absolute;left:142px;top:668px;width:1px;height:25px;background:#e1e1e1"></div><div style="position:absolute;left:311px;top:668px;width:1px;height:25px;background:#e1e1e1"></div><div style="position:absolute;left:414px;top:668px;width:1px;height:25px;background:#e1e1e1"></div><div style="position:absolute;left:545px;top:668px;width:1px;height:25px;background:#e1e1e1"></div><div style="position:absolute;left:678px;top:668px;width:1px;height:25px;background:#e1e1e1"></div><div style="position:absolute;left:764px;top:668px;width:1px;height:25px;background:#e1e1e1"></div><div style="position:absolute;left:850px;top:668px;width:1px;height:25px;background:#e1e1e1"></div><div style="position:absolute;left:948px;top:668px;width:1px;height:25px;background:#e1e1e1"></div><div style="position:absolute;left:1042px;top:668px;width:1px;height:25px;background:#e1e1e1"></div><div style="position:absolute;left:1197px;top:668px;width:1px;height:25px;background:#e1e1e1"></div><div style="position:absolute;left:1301px;top:668px;width:1px;height:25px;background:#e1e1e1"></div><div style="position:absolute;left:1438px;top:668px;width:1px;height:25px;background:#e1e1e1"></div><div style="position:absolute;left:1536px;top:668px;width:1px;height:25px;background:#e1e1e1"></div><div style="position:absolute;left:1643px;top:668px;width:1px;height:25px;background:#e1e1e1"></div><div style="position:absolute;left:1758px;top:668px;width:1px;height:25px;background:#e1e1e1"></div><div style="position:absolute;left:37px;top:693px;width:1723px;height:27px;background:#c0e4f5"></div><div style="position:absolute;left:142px;top:720px;width:1px;height:25px;background:#e1e1e1"></div><div style="position:absolute;left:311px;top:720px;width:1px;height:25px;background:#e1e1e1"></div><div style="position:absolute;left:414px;top:720px;width:1px;height:25px;background:#e1e1e1"></div><div style="position:absolute;left:545px;top:720px;width:1px;height:25px;background:#e1e1e1"></div><div style="position:absolute;left:678px;top:720px;width:1px;height:25px;background:#e1e1e1"></div><div style="position:absolute;left:764px;top:720px;width:1px;height:25px;background:#e1e1e1"></div><div style="position:absolute;left:850px;top:720px;width:1px;height:25px;background:#e1e1e1"></div><div style="position:absolute;left:948px;top:720px;width:1px;height:25px;background:#e1e1e1"></div><div style="position:absolute;left:1042px;top:720px;width:1px;height:25px;background:#e1e1e1"></div><div style="position:absolute;left:1197px;top:720px;width:1px;height:25px;background:#e1e1e1"></div><div style="position:absolute;left:1301px;top:720px;width:1px;height:25px;background:#e1e1e1"></div><div style="position:absolute;left:1438px;top:720px;width:1px;height:25px;background:#e1e1e1"></div><div style="position:absolute;left:1536px;top:720px;width:1px;height:25px;background:#e1e1e1"></div><div style="position:absolute;left:1643px;top:720px;width:1px;height:25px;background:#e1e1e1"></div><div style="position:absolute;left:1758px;top:720px;width:1px;height:25px;background:#e1e1e1"></div><div style="position:absolute;left:37px;top:745px;width:1723px;height:27px;background:#c0e4f5"></div><div style="position:absolute;left:142px;top:772px;width:1px;height:25px;background:#e1e1e1"></div><div style="position:absolute;left:311px;top:772px;width:1px;height:25px;background:#e1e1e1"></div><div style="position:absolute;left:414px;top:772px;width:1px;height:25px;background:#e1e1e1"></div><div style="position:absolute;left:545px;top:772px;width:1px;height:25px;background:#e1e1e1"></div><div style="position:absolute;left:678px;top:772px;width:1px;height:25px;background:#e1e1e1"></div><div style="position:absolute;left:764px;top:772px;width:1px;height:25px;background:#e1e1e1"></div><div style="position:absolute;left:850px;top:772px;width:1px;height:25px;background:#e1e1e1"></div><div style="position:absolute;left:948px;top:772px;width:1px;height:25px;background:#e1e1e1"></div><div style="position:absolute;left:1042px;top:772px;width:1px;height:25px;background:#e1e1e1"></div><div style="position:absolute;left:1197px;top:772px;width:1px;height:25px;background:#e1e1e1"></div><div style="position:absolute;left:1301px;top:772px;width:1px;height:25px;background:#e1e1e1"></div><div style="position:absolute;left:1438px;top:772px;width:1px;height:25px;background:#e1e1e1"></div><div style="position:absolute;left:1536px;top:772px;width:1px;height:25px;background:#e1e1e1"></div><div style="position:absolute;left:1643px;top:772px;width:1px;height:25px;background:#e1e1e1"></div><div style="position:absolute;left:1758px;top:772px;width:1px;height:25px;background:#e1e1e1"></div><div style="position:absolute;left:37px;top:797px;width:1723px;height:27px;background:#c0e4f5"></div><div style="position:absolute;left:142px;top:824px;width:1px;height:25px;background:#e1e1e1"></div><div style="position:absolute;left:311px;top:824px;width:1px;height:25px;background:#e1e1e1"></div><div style="position:absolute;left:414px;top:824px;width:1px;height:25px;background:#e1e1e1"></div><div style="position:absolute;left:545px;top:824px;width:1px;height:25px;background:#e1e1e1"></div><div style="position:absolute;left:678px;top:824px;width:1px;height:25px;background:#e1e1e1"></div><div style="position:absolute;left:764px;top:824px;width:1px;height:25px;background:#e1e1e1"></div><div style="position:absolute;left:850px;top:824px;width:1px;height:25px;background:#e1e1e1"></div><div style="position:absolute;left:948px;top:824px;width:1px;height:25px;background:#e1e1e1"></div><div style="position:absolute;left:1042px;top:824px;width:1px;height:25px;background:#e1e1e1"></div><div style="position:absolute;left:1197px;top:824px;width:1px;height:25px;background:#e1e1e1"></div><div style="position:absolute;left:1301px;top:824px;width:1px;height:25px;background:#e1e1e1"></div><div style="position:absolute;left:1438px;top:824px;width:1px;height:25px;background:#e1e1e1"></div><div style="position:absolute;left:1536px;top:824px;width:1px;height:25px;background:#e1e1e1"></div><div style="position:absolute;left:1643px;top:824px;width:1px;height:25px;background:#e1e1e1"></div><div style="position:absolute;left:1758px;top:824px;width:1px;height:25px;background:#e1e1e1"></div><div style="position:absolute;left:37px;top:849px;width:1723px;height:27px;background:#c0e4f5"></div><div style="position:absolute;left:142px;top:876px;width:1px;height:25px;background:#e1e1e1"></div><div style="position:absolute;left:311px;top:876px;width:1px;height:25px;background:#e1e1e1"></div><div style="position:absolute;left:414px;top:876px;width:1px;height:25px;background:#e1e1e1"></div><div style="position:absolute;left:545px;top:876px;width:1px;height:25px;background:#e1e1e1"></div><div style="position:absolute;left:678px;top:876px;width:1px;height:25px;background:#e1e1e1"></div><div style="position:absolute;left:764px;top:876px;width:1px;height:25px;background:#e1e1e1"></div><div style="position:absolute;left:850px;top:876px;width:1px;height:25px;background:#e1e1e1"></div><div style="position:absolute;left:948px;top:876px;width:1px;height:25px;background:#e1e1e1"></div><div style="position:absolute;left:1042px;top:876px;width:1px;height:25px;background:#e1e1e1"></div><div style="position:absolute;left:1197px;top:876px;width:1px;height:25px;background:#e1e1e1"></div><div style="position:absolute;left:1301px;top:876px;width:1px;height:25px;background:#e1e1e1"></div><div style="position:absolute;left:1438px;top:876px;width:1px;height:25px;background:#e1e1e1"></div><div style="position:absolute;left:1536px;top:876px;width:1px;height:25px;background:#e1e1e1"></div><div style="position:absolute;left:1643px;top:876px;width:1px;height:25px;background:#e1e1e1"></div><div style="position:absolute;left:1758px;top:876px;width:1px;height:25px;background:#e1e1e1"></div><div style="position:absolute;left:37px;top:901px;width:1723px;height:27px;background:#c0e4f5"></div><div style="position:absolute;left:142px;top:928px;width:1px;height:25px;background:#e1e1e1"></div><div style="position:absolute;left:311px;top:928px;width:1px;height:25px;background:#e1e1e1"></div><div style="position:absolute;left:414px;top:928px;width:1px;height:25px;background:#e1e1e1"></div><div style="position:absolute;left:545px;top:928px;width:1px;height:25px;background:#e1e1e1"></div><div style="position:absolute;left:678px;top:928px;width:1px;height:25px;background:#e1e1e1"></div><div style="position:absolute;left:764px;top:928px;width:1px;height:25px;background:#e1e1e1"></div><div style="position:absolute;left:850px;top:928px;width:1px;height:25px;background:#e1e1e1"></div><div style="position:absolute;left:948px;top:928px;width:1px;height:25px;background:#e1e1e1"></div><div style="position:absolute;left:1042px;top:928px;width:1px;height:25px;background:#e1e1e1"></div><div style="position:absolute;left:1197px;top:928px;width:1px;height:25px;background:#e1e1e1"></div><div style="position:absolute;left:1301px;top:928px;width:1px;height:25px;background:#e1e1e1"></div><div style="position:absolute;left:1438px;top:928px;width:1px;height:25px;background:#e1e1e1"></div><div style="position:absolute;left:1536px;top:928px;width:1px;height:25px;background:#e1e1e1"></div><div style="position:absolute;left:1643px;top:928px;width:1px;height:25px;background:#e1e1e1"></div><div style="position:absolute;left:1758px;top:928px;width:1px;height:25px;background:#e1e1e1"></div><div style="position:absolute;left:37px;top:225px;width:1722px;height:1px;background:#165e83"></div><div style="position:absolute;left:36px;top:0;width:81px;height:986px;overflow:hidden"><div style="position:absolute;left:-36px;top:0"><div style="position:absolute;left:40.00px;top:205.79px;font-size:17.5px;line-height:17.5px;font-weight:700;color:#0b3656;white-space:pre;transform:scaleX(0.9808);transform-origin:0 0;">Time(ms)</div></div></div><div style="position:absolute;left:117px;top:200px;width:25px;height:25px;border:1px solid #a6aab0;background:linear-gradient(#fdfdfe,#eef0f4)"></div><svg style="position:absolute;left:117px;top:200px" width="25" height="25" viewBox="0 0 25 25"><path d="M7.8 9.8h9.4l-4.7 5.2z" fill="#666"/></svg><div style="position:absolute;left:142px;top:0;width:144px;height:986px;overflow:hidden"><div style="position:absolute;left:-142px;top:0"><div style="position:absolute;left:146.00px;top:205.79px;font-size:17.5px;line-height:17.5px;font-weight:700;color:#0b3656;white-space:pre;transform:scaleX(0.9686);transform-origin:0 0;">gNB or eNB Name</div></div></div><div style="position:absolute;left:286px;top:200px;width:25px;height:25px;border:1px solid #a6aab0;background:linear-gradient(#fdfdfe,#eef0f4)"></div><svg style="position:absolute;left:286px;top:200px" width="25" height="25" viewBox="0 0 25 25"><path d="M7.8 9.8h9.4l-4.7 5.2z" fill="#666"/></svg><div style="position:absolute;left:311px;top:0;width:78px;height:986px;overflow:hidden"><div style="position:absolute;left:-311px;top:0"><div style="position:absolute;left:315.00px;top:205.79px;font-size:17.5px;line-height:17.5px;font-weight:700;color:#0b3656;white-space:pre;transform:scaleX(0.9760);transform-origin:0 0;">UE Name</div></div></div><div style="position:absolute;left:389px;top:200px;width:25px;height:25px;border:1px solid #a6aab0;background:linear-gradient(#fdfdfe,#eef0f4)"></div><svg style="position:absolute;left:389px;top:200px" width="25" height="25" viewBox="0 0 25 25"><path d="M7 7h14l-5 5.2v4.8h-4v-4.8z" fill="#5f5f5f"/><path d="M4 14h7l-3.5 4z" fill="#5f5f5f"/></svg><div style="position:absolute;left:414px;top:0;width:106px;height:986px;overflow:hidden"><div style="position:absolute;left:-414px;top:0"><div style="position:absolute;left:418.00px;top:205.79px;font-size:17.5px;line-height:17.5px;font-weight:700;color:#0b3656;white-space:pre;transform:scaleX(0.9953);transform-origin:0 0;">Distance(m)</div></div></div><div style="position:absolute;left:520px;top:200px;width:25px;height:25px;border:1px solid #a6aab0;background:linear-gradient(#fdfdfe,#eef0f4)"></div><svg style="position:absolute;left:520px;top:200px" width="25" height="25" viewBox="0 0 25 25"><path d="M7.8 9.8h9.4l-4.7 5.2z" fill="#666"/></svg><div style="position:absolute;left:545px;top:0;width:108px;height:986px;overflow:hidden"><div style="position:absolute;left:-545px;top:0"><div style="position:absolute;left:549.00px;top:205.79px;font-size:17.5px;line-height:17.5px;font-weight:700;color:#0b3656;white-space:pre;transform:scaleX(0.9586);transform-origin:0 0;">isAssociated</div></div></div><div style="position:absolute;left:653px;top:200px;width:25px;height:25px;border:1px solid #a6aab0;background:linear-gradient(#fdfdfe,#eef0f4)"></div><svg style="position:absolute;left:653px;top:200px" width="25" height="25" viewBox="0 0 25 25"><path d="M7.8 9.8h9.4l-4.7 5.2z" fill="#666"/></svg><div style="position:absolute;left:678px;top:0;width:61px;height:986px;overflow:hidden"><div style="position:absolute;left:-678px;top:0"><div style="position:absolute;left:682.00px;top:205.79px;font-size:17.5px;line-height:17.5px;font-weight:700;color:#0b3656;white-space:pre;transform:scaleX(0.9635);transform-origin:0 0;">CC_ID</div></div></div><div style="position:absolute;left:739px;top:200px;width:25px;height:25px;border:1px solid #a6aab0;background:linear-gradient(#fdfdfe,#eef0f4)"></div><svg style="position:absolute;left:739px;top:200px" width="25" height="25" viewBox="0 0 25 25"><path d="M7.8 9.8h9.4l-4.7 5.2z" fill="#666"/></svg><div style="position:absolute;left:764px;top:0;width:61px;height:986px;overflow:hidden"><div style="position:absolute;left:-764px;top:0"><div style="position:absolute;left:768.00px;top:205.79px;font-size:17.5px;line-height:17.5px;font-weight:700;color:#0b3656;white-space:pre;transform:scaleX(0.9371);transform-origin:0 0;">Band</div></div></div><div style="position:absolute;left:825px;top:200px;width:25px;height:25px;border:1px solid #a6aab0;background:linear-gradient(#fdfdfe,#eef0f4)"></div><svg style="position:absolute;left:825px;top:200px" width="25" height="25" viewBox="0 0 25 25"><path d="M7.8 9.8h9.4l-4.7 5.2z" fill="#666"/></svg><div style="position:absolute;left:850px;top:0;width:73px;height:986px;overflow:hidden"><div style="position:absolute;left:-850px;top:0"><div style="position:absolute;left:854.00px;top:205.79px;font-size:17.5px;line-height:17.5px;font-weight:700;color:#0b3656;white-space:pre;transform:scaleX(0.9921);transform-origin:0 0;">Channel</div></div></div><div style="position:absolute;left:923px;top:200px;width:25px;height:25px;border:1px solid #a6aab0;background:linear-gradient(#fdfdfe,#eef0f4)"></div><svg style="position:absolute;left:923px;top:200px" width="25" height="25" viewBox="0 0 25 25"><path d="M7 7h14l-5 5.2v4.8h-4v-4.8z" fill="#5f5f5f"/><path d="M4 14h7l-3.5 4z" fill="#5f5f5f"/></svg><div style="position:absolute;left:948px;top:0;width:69px;height:986px;overflow:hidden"><div style="position:absolute;left:-948px;top:0"><div style="position:absolute;left:952.00px;top:205.79px;font-size:17.5px;line-height:17.5px;font-weight:700;color:#0b3656;white-space:pre;transform:scaleX(0.9629);transform-origin:0 0;">Layer ID</div></div></div><div style="position:absolute;left:1017px;top:200px;width:25px;height:25px;border:1px solid #a6aab0;background:linear-gradient(#fdfdfe,#eef0f4)"></div><svg style="position:absolute;left:1017px;top:200px" width="25" height="25" viewBox="0 0 25 25"><path d="M7 7h14l-5 5.2v4.8h-4v-4.8z" fill="#5f5f5f"/><path d="M4 14h7l-3.5 4z" fill="#5f5f5f"/></svg><div style="position:absolute;left:1042px;top:0;width:130px;height:986px;overflow:hidden"><div style="position:absolute;left:-1042px;top:0"><div style="position:absolute;left:1046.00px;top:205.79px;font-size:17.5px;line-height:17.5px;font-weight:700;color:#0b3656;white-space:pre;transform:scaleX(0.9443);transform-origin:0 0;">Tx_Power(dBm)</div></div></div><div style="position:absolute;left:1172px;top:200px;width:25px;height:25px;border:1px solid #a6aab0;background:linear-gradient(#fdfdfe,#eef0f4)"></div><svg style="position:absolute;left:1172px;top:200px" width="25" height="25" viewBox="0 0 25 25"><path d="M7.8 9.8h9.4l-4.7 5.2z" fill="#666"/></svg><div style="position:absolute;left:1197px;top:0;width:79px;height:986px;overflow:hidden"><div style="position:absolute;left:-1197px;top:0"><div style="position:absolute;left:1201.00px;top:205.79px;font-size:17.5px;line-height:17.5px;font-weight:700;color:#0b3656;white-space:pre;transform:scaleX(0.9353);transform-origin:0 0;">LoS State</div></div></div><div style="position:absolute;left:1276px;top:200px;width:25px;height:25px;border:1px solid #a6aab0;background:linear-gradient(#fdfdfe,#eef0f4)"></div><svg style="position:absolute;left:1276px;top:200px" width="25" height="25" viewBox="0 0 25 25"><path d="M7.8 9.8h9.4l-4.7 5.2z" fill="#666"/></svg><div style="position:absolute;left:1301px;top:0;width:112px;height:986px;overflow:hidden"><div style="position:absolute;left:-1301px;top:0"><div style="position:absolute;left:1305.00px;top:205.79px;font-size:17.5px;line-height:17.5px;font-weight:700;color:#0b3656;white-space:pre;transform:scaleX(0.9407);transform-origin:0 0;">PathLoss(dB)</div></div></div><div style="position:absolute;left:1413px;top:200px;width:25px;height:25px;border:1px solid #a6aab0;background:linear-gradient(#fdfdfe,#eef0f4)"></div><svg style="position:absolute;left:1413px;top:200px" width="25" height="25" viewBox="0 0 25 25"><path d="M7.8 9.8h9.4l-4.7 5.2z" fill="#666"/></svg><div style="position:absolute;left:1438px;top:0;width:73px;height:986px;overflow:hidden"><div style="position:absolute;left:-1438px;top:0"><div style="position:absolute;left:1442.00px;top:205.79px;font-size:17.5px;line-height:17.5px;font-weight:700;color:#0b3656;white-space:pre;transform:scaleX(0.9341);transform-origin:0 0;">SNR(dB)</div></div></div><div style="position:absolute;left:1511px;top:200px;width:25px;height:25px;border:1px solid #a6aab0;background:linear-gradient(#fdfdfe,#eef0f4)"></div><svg style="position:absolute;left:1511px;top:200px" width="25" height="25" viewBox="0 0 25 25"><path d="M7.8 9.8h9.4l-4.7 5.2z" fill="#666"/></svg><div style="position:absolute;left:1536px;top:0;width:82px;height:986px;overflow:hidden"><div style="position:absolute;left:-1536px;top:0"><div style="position:absolute;left:1540.00px;top:205.79px;font-size:17.5px;line-height:17.5px;font-weight:700;color:#0b3656;white-space:pre;transform:scaleX(0.9793);transform-origin:0 0;">CQI Index</div></div></div><div style="position:absolute;left:1618px;top:200px;width:25px;height:25px;border:1px solid #a6aab0;background:linear-gradient(#fdfdfe,#eef0f4)"></div><svg style="position:absolute;left:1618px;top:200px" width="25" height="25" viewBox="0 0 25 25"><path d="M7.8 9.8h9.4l-4.7 5.2z" fill="#666"/></svg><div style="position:absolute;left:1643px;top:0;width:90px;height:986px;overflow:hidden"><div style="position:absolute;left:-1643px;top:0"><div style="position:absolute;left:1647.00px;top:205.79px;font-size:17.5px;line-height:17.5px;font-weight:700;color:#0b3656;white-space:pre;transform:scaleX(0.9836);transform-origin:0 0;">MCS Index</div></div></div><div style="position:absolute;left:1733px;top:200px;width:25px;height:25px;border:1px solid #a6aab0;background:linear-gradient(#fdfdfe,#eef0f4)"></div><svg style="position:absolute;left:1733px;top:200px" width="25" height="25" viewBox="0 0 25 25"><path d="M7.8 9.8h9.4l-4.7 5.2z" fill="#666"/></svg><div style="position:absolute;left:109.20px;top:232.19px;font-size:17.5px;line-height:17.5px;font-weight:400;color:#0b3656;white-space:pre;">161</div><div style="position:absolute;left:142px;top:0;width:169px;height:986px;overflow:hidden"><div style="position:absolute;left:-142px;top:0"><div style="position:absolute;left:146.60px;top:232.19px;font-size:17.5px;line-height:17.5px;font-weight:400;color:#0b3656;white-space:pre;transform:scaleX(0.9347);transform-origin:0 0;">MACRO CELL GNB O</div></div></div><div style="position:absolute;left:315.60px;top:232.19px;font-size:17.5px;line-height:17.5px;font-weight:400;color:#0b3656;white-space:pre;transform:scaleX(0.8908);transform-origin:0 0;">UE_1</div><div style="position:absolute;left:503.10px;top:232.19px;font-size:17.5px;line-height:17.5px;font-weight:400;color:#0b3656;white-space:pre;transform:scaleX(0.9836);transform-origin:0 0;">1900</div><div style="position:absolute;left:591.50px;top:232.19px;font-size:17.5px;line-height:17.5px;font-weight:400;color:#0b3656;white-space:pre;transform:scaleX(0.8396);transform-origin:0 0;">TRUE</div><div style="position:absolute;left:750.67px;top:232.19px;font-size:17.5px;line-height:17.5px;font-weight:400;color:#0b3656;white-space:pre;">1</div><div style="position:absolute;left:768.60px;top:232.19px;font-size:17.5px;line-height:17.5px;font-weight:400;color:#0b3656;white-space:pre;transform:scaleX(0.9759);transform-origin:0 0;">n78</div><div style="position:absolute;left:854.60px;top:232.19px;font-size:17.5px;line-height:17.5px;font-weight:400;color:#0b3656;white-space:pre;transform:scaleX(0.9467);transform-origin:0 0;">PDSCH</div><div style="position:absolute;left:1028.67px;top:232.19px;font-size:17.5px;line-height:17.5px;font-weight:400;color:#0b3656;white-space:pre;">1</div><div style="position:absolute;left:1173.93px;top:232.19px;font-size:17.5px;line-height:17.5px;font-weight:400;color:#0b3656;white-space:pre;">40</div><div style="position:absolute;left:1201.60px;top:232.19px;font-size:17.5px;line-height:17.5px;font-weight:400;color:#0b3656;white-space:pre;transform:scaleX(0.8678);transform-origin:0 0;">LOS</div><div style="position:absolute;left:1341.00px;top:232.19px;font-size:17.5px;line-height:17.5px;font-weight:400;color:#0b3656;white-space:pre;transform:scaleX(1.0101);transform-origin:0 0;">121.799079</div><div style="position:absolute;left:1448.40px;top:232.19px;font-size:17.5px;line-height:17.5px;font-weight:400;color:#0b3656;white-space:pre;transform:scaleX(1.0153);transform-origin:0 0;">25.040502</div><div style="position:absolute;left:1619.93px;top:232.19px;font-size:17.5px;line-height:17.5px;font-weight:400;color:#0b3656;white-space:pre;">15</div><div style="position:absolute;left:1734.93px;top:232.19px;font-size:17.5px;line-height:17.5px;font-weight:400;color:#0b3656;white-space:pre;">27</div><div style="position:absolute;left:109.20px;top:258.19px;font-size:17.5px;line-height:17.5px;font-weight:400;color:#0b3656;white-space:pre;">161</div><div style="position:absolute;left:142px;top:0;width:169px;height:986px;overflow:hidden"><div style="position:absolute;left:-142px;top:0"><div style="position:absolute;left:146.60px;top:258.19px;font-size:17.5px;line-height:17.5px;font-weight:400;color:#0b3656;white-space:pre;transform:scaleX(0.9347);transform-origin:0 0;">MACRO CELL GNB O</div></div></div><div style="position:absolute;left:315.60px;top:258.19px;font-size:17.5px;line-height:17.5px;font-weight:400;color:#0b3656;white-space:pre;transform:scaleX(0.8908);transform-origin:0 0;">UE_1</div><div style="position:absolute;left:503.10px;top:258.19px;font-size:17.5px;line-height:17.5px;font-weight:400;color:#0b3656;white-space:pre;transform:scaleX(0.9836);transform-origin:0 0;">1900</div><div style="position:absolute;left:591.50px;top:258.19px;font-size:17.5px;line-height:17.5px;font-weight:400;color:#0b3656;white-space:pre;transform:scaleX(0.8396);transform-origin:0 0;">TRUE</div><div style="position:absolute;left:750.67px;top:258.19px;font-size:17.5px;line-height:17.5px;font-weight:400;color:#0b3656;white-space:pre;">1</div><div style="position:absolute;left:768.60px;top:258.19px;font-size:17.5px;line-height:17.5px;font-weight:400;color:#0b3656;white-space:pre;transform:scaleX(0.9759);transform-origin:0 0;">n78</div><div style="position:absolute;left:854.60px;top:258.19px;font-size:17.5px;line-height:17.5px;font-weight:400;color:#0b3656;white-space:pre;transform:scaleX(0.9467);transform-origin:0 0;">PDSCH</div><div style="position:absolute;left:1028.67px;top:258.19px;font-size:17.5px;line-height:17.5px;font-weight:400;color:#0b3656;white-space:pre;">1</div><div style="position:absolute;left:1173.93px;top:258.19px;font-size:17.5px;line-height:17.5px;font-weight:400;color:#0b3656;white-space:pre;">40</div><div style="position:absolute;left:1201.60px;top:258.19px;font-size:17.5px;line-height:17.5px;font-weight:400;color:#0b3656;white-space:pre;transform:scaleX(0.8678);transform-origin:0 0;">LOS</div><div style="position:absolute;left:1341.00px;top:258.19px;font-size:17.5px;line-height:17.5px;font-weight:400;color:#0b3656;white-space:pre;transform:scaleX(1.0101);transform-origin:0 0;">121.799079</div><div style="position:absolute;left:1448.40px;top:258.19px;font-size:17.5px;line-height:17.5px;font-weight:400;color:#0b3656;white-space:pre;transform:scaleX(1.0153);transform-origin:0 0;">25.040502</div><div style="position:absolute;left:1619.93px;top:258.19px;font-size:17.5px;line-height:17.5px;font-weight:400;color:#0b3656;white-space:pre;">15</div><div style="position:absolute;left:1734.93px;top:258.19px;font-size:17.5px;line-height:17.5px;font-weight:400;color:#0b3656;white-space:pre;">27</div><div style="position:absolute;left:94.60px;top:284.19px;font-size:17.5px;line-height:17.5px;font-weight:400;color:#0b3656;white-space:pre;">161.5</div><div style="position:absolute;left:142px;top:0;width:169px;height:986px;overflow:hidden"><div style="position:absolute;left:-142px;top:0"><div style="position:absolute;left:146.60px;top:284.19px;font-size:17.5px;line-height:17.5px;font-weight:400;color:#0b3656;white-space:pre;transform:scaleX(0.9347);transform-origin:0 0;">MACRO CELL GNB O</div></div></div><div style="position:absolute;left:315.60px;top:284.19px;font-size:17.5px;line-height:17.5px;font-weight:400;color:#0b3656;white-space:pre;transform:scaleX(0.8908);transform-origin:0 0;">UE_1</div><div style="position:absolute;left:503.10px;top:284.19px;font-size:17.5px;line-height:17.5px;font-weight:400;color:#0b3656;white-space:pre;transform:scaleX(0.9836);transform-origin:0 0;">1900</div><div style="position:absolute;left:591.50px;top:284.19px;font-size:17.5px;line-height:17.5px;font-weight:400;color:#0b3656;white-space:pre;transform:scaleX(0.8396);transform-origin:0 0;">TRUE</div><div style="position:absolute;left:750.67px;top:284.19px;font-size:17.5px;line-height:17.5px;font-weight:400;color:#0b3656;white-space:pre;">1</div><div style="position:absolute;left:768.60px;top:284.19px;font-size:17.5px;line-height:17.5px;font-weight:400;color:#0b3656;white-space:pre;transform:scaleX(0.9759);transform-origin:0 0;">n78</div><div style="position:absolute;left:854.60px;top:284.19px;font-size:17.5px;line-height:17.5px;font-weight:400;color:#0b3656;white-space:pre;transform:scaleX(0.9467);transform-origin:0 0;">PDSCH</div><div style="position:absolute;left:1028.67px;top:284.19px;font-size:17.5px;line-height:17.5px;font-weight:400;color:#0b3656;white-space:pre;">1</div><div style="position:absolute;left:1173.93px;top:284.19px;font-size:17.5px;line-height:17.5px;font-weight:400;color:#0b3656;white-space:pre;">40</div><div style="position:absolute;left:1201.60px;top:284.19px;font-size:17.5px;line-height:17.5px;font-weight:400;color:#0b3656;white-space:pre;transform:scaleX(0.8678);transform-origin:0 0;">LOS</div><div style="position:absolute;left:1341.00px;top:284.19px;font-size:17.5px;line-height:17.5px;font-weight:400;color:#0b3656;white-space:pre;transform:scaleX(1.0101);transform-origin:0 0;">121.799079</div><div style="position:absolute;left:1448.40px;top:284.19px;font-size:17.5px;line-height:17.5px;font-weight:400;color:#0b3656;white-space:pre;transform:scaleX(1.0153);transform-origin:0 0;">25.040502</div><div style="position:absolute;left:1619.93px;top:284.19px;font-size:17.5px;line-height:17.5px;font-weight:400;color:#0b3656;white-space:pre;">15</div><div style="position:absolute;left:1734.93px;top:284.19px;font-size:17.5px;line-height:17.5px;font-weight:400;color:#0b3656;white-space:pre;">27</div><div style="position:absolute;left:109.20px;top:310.19px;font-size:17.5px;line-height:17.5px;font-weight:400;color:#0b3656;white-space:pre;">162</div><div style="position:absolute;left:142px;top:0;width:169px;height:986px;overflow:hidden"><div style="position:absolute;left:-142px;top:0"><div style="position:absolute;left:146.60px;top:310.19px;font-size:17.5px;line-height:17.5px;font-weight:400;color:#0b3656;white-space:pre;transform:scaleX(0.9347);transform-origin:0 0;">MACRO CELL GNB O</div></div></div><div style="position:absolute;left:315.60px;top:310.19px;font-size:17.5px;line-height:17.5px;font-weight:400;color:#0b3656;white-space:pre;transform:scaleX(0.8908);transform-origin:0 0;">UE_1</div><div style="position:absolute;left:503.10px;top:310.19px;font-size:17.5px;line-height:17.5px;font-weight:400;color:#0b3656;white-space:pre;transform:scaleX(0.9836);transform-origin:0 0;">1900</div><div style="position:absolute;left:591.50px;top:310.19px;font-size:17.5px;line-height:17.5px;font-weight:400;color:#0b3656;white-space:pre;transform:scaleX(0.8396);transform-origin:0 0;">TRUE</div><div style="position:absolute;left:750.67px;top:310.19px;font-size:17.5px;line-height:17.5px;font-weight:400;color:#0b3656;white-space:pre;">1</div><div style="position:absolute;left:768.60px;top:310.19px;font-size:17.5px;line-height:17.5px;font-weight:400;color:#0b3656;white-space:pre;transform:scaleX(0.9759);transform-origin:0 0;">n78</div><div style="position:absolute;left:854.60px;top:310.19px;font-size:17.5px;line-height:17.5px;font-weight:400;color:#0b3656;white-space:pre;transform:scaleX(0.9467);transform-origin:0 0;">PDSCH</div><div style="position:absolute;left:1028.67px;top:310.19px;font-size:17.5px;line-height:17.5px;font-weight:400;color:#0b3656;white-space:pre;">1</div><div style="position:absolute;left:1173.93px;top:310.19px;font-size:17.5px;line-height:17.5px;font-weight:400;color:#0b3656;white-space:pre;">40</div><div style="position:absolute;left:1201.60px;top:310.19px;font-size:17.5px;line-height:17.5px;font-weight:400;color:#0b3656;white-space:pre;transform:scaleX(0.8678);transform-origin:0 0;">LOS</div><div style="position:absolute;left:1341.00px;top:310.19px;font-size:17.5px;line-height:17.5px;font-weight:400;color:#0b3656;white-space:pre;transform:scaleX(1.0101);transform-origin:0 0;">121.799079</div><div style="position:absolute;left:1448.40px;top:310.19px;font-size:17.5px;line-height:17.5px;font-weight:400;color:#0b3656;white-space:pre;transform:scaleX(1.0153);transform-origin:0 0;">25.040502</div><div style="position:absolute;left:1619.93px;top:310.19px;font-size:17.5px;line-height:17.5px;font-weight:400;color:#0b3656;white-space:pre;">15</div><div style="position:absolute;left:1734.93px;top:310.19px;font-size:17.5px;line-height:17.5px;font-weight:400;color:#0b3656;white-space:pre;">27</div><div style="position:absolute;left:94.60px;top:336.19px;font-size:17.5px;line-height:17.5px;font-weight:400;color:#0b3656;white-space:pre;">162.5</div><div style="position:absolute;left:142px;top:0;width:169px;height:986px;overflow:hidden"><div style="position:absolute;left:-142px;top:0"><div style="position:absolute;left:146.60px;top:336.19px;font-size:17.5px;line-height:17.5px;font-weight:400;color:#0b3656;white-space:pre;transform:scaleX(0.9347);transform-origin:0 0;">MACRO CELL GNB O</div></div></div><div style="position:absolute;left:315.60px;top:336.19px;font-size:17.5px;line-height:17.5px;font-weight:400;color:#0b3656;white-space:pre;transform:scaleX(0.8908);transform-origin:0 0;">UE_1</div><div style="position:absolute;left:503.10px;top:336.19px;font-size:17.5px;line-height:17.5px;font-weight:400;color:#0b3656;white-space:pre;transform:scaleX(0.9836);transform-origin:0 0;">1900</div><div style="position:absolute;left:591.50px;top:336.19px;font-size:17.5px;line-height:17.5px;font-weight:400;color:#0b3656;white-space:pre;transform:scaleX(0.8396);transform-origin:0 0;">TRUE</div><div style="position:absolute;left:750.67px;top:336.19px;font-size:17.5px;line-height:17.5px;font-weight:400;color:#0b3656;white-space:pre;">1</div><div style="position:absolute;left:768.60px;top:336.19px;font-size:17.5px;line-height:17.5px;font-weight:400;color:#0b3656;white-space:pre;transform:scaleX(0.9759);transform-origin:0 0;">n78</div><div style="position:absolute;left:854.60px;top:336.19px;font-size:17.5px;line-height:17.5px;font-weight:400;color:#0b3656;white-space:pre;transform:scaleX(0.9467);transform-origin:0 0;">PDSCH</div><div style="position:absolute;left:1028.67px;top:336.19px;font-size:17.5px;line-height:17.5px;font-weight:400;color:#0b3656;white-space:pre;">1</div><div style="position:absolute;left:1173.93px;top:336.19px;font-size:17.5px;line-height:17.5px;font-weight:400;color:#0b3656;white-space:pre;">40</div><div style="position:absolute;left:1201.60px;top:336.19px;font-size:17.5px;line-height:17.5px;font-weight:400;color:#0b3656;white-space:pre;transform:scaleX(0.8678);transform-origin:0 0;">LOS</div><div style="position:absolute;left:1341.00px;top:336.19px;font-size:17.5px;line-height:17.5px;font-weight:400;color:#0b3656;white-space:pre;transform:scaleX(1.0101);transform-origin:0 0;">121.799079</div><div style="position:absolute;left:1448.40px;top:336.19px;font-size:17.5px;line-height:17.5px;font-weight:400;color:#0b3656;white-space:pre;transform:scaleX(1.0153);transform-origin:0 0;">25.040502</div><div style="position:absolute;left:1619.93px;top:336.19px;font-size:17.5px;line-height:17.5px;font-weight:400;color:#0b3656;white-space:pre;">15</div><div style="position:absolute;left:1734.93px;top:336.19px;font-size:17.5px;line-height:17.5px;font-weight:400;color:#0b3656;white-space:pre;">27</div><div style="position:absolute;left:109.20px;top:362.19px;font-size:17.5px;line-height:17.5px;font-weight:400;color:#0b3656;white-space:pre;">163</div><div style="position:absolute;left:142px;top:0;width:169px;height:986px;overflow:hidden"><div style="position:absolute;left:-142px;top:0"><div style="position:absolute;left:146.60px;top:362.19px;font-size:17.5px;line-height:17.5px;font-weight:400;color:#0b3656;white-space:pre;transform:scaleX(0.9347);transform-origin:0 0;">MACRO CELL GNB O</div></div></div><div style="position:absolute;left:315.60px;top:362.19px;font-size:17.5px;line-height:17.5px;font-weight:400;color:#0b3656;white-space:pre;transform:scaleX(0.8908);transform-origin:0 0;">UE_1</div><div style="position:absolute;left:503.10px;top:362.19px;font-size:17.5px;line-height:17.5px;font-weight:400;color:#0b3656;white-space:pre;transform:scaleX(0.9836);transform-origin:0 0;">1900</div><div style="position:absolute;left:591.50px;top:362.19px;font-size:17.5px;line-height:17.5px;font-weight:400;color:#0b3656;white-space:pre;transform:scaleX(0.8396);transform-origin:0 0;">TRUE</div><div style="position:absolute;left:750.67px;top:362.19px;font-size:17.5px;line-height:17.5px;font-weight:400;color:#0b3656;white-space:pre;">1</div><div style="position:absolute;left:768.60px;top:362.19px;font-size:17.5px;line-height:17.5px;font-weight:400;color:#0b3656;white-space:pre;transform:scaleX(0.9759);transform-origin:0 0;">n78</div><div style="position:absolute;left:854.60px;top:362.19px;font-size:17.5px;line-height:17.5px;font-weight:400;color:#0b3656;white-space:pre;transform:scaleX(0.9467);transform-origin:0 0;">PDSCH</div><div style="position:absolute;left:1028.67px;top:362.19px;font-size:17.5px;line-height:17.5px;font-weight:400;color:#0b3656;white-space:pre;">1</div><div style="position:absolute;left:1173.93px;top:362.19px;font-size:17.5px;line-height:17.5px;font-weight:400;color:#0b3656;white-space:pre;">40</div><div style="position:absolute;left:1201.60px;top:362.19px;font-size:17.5px;line-height:17.5px;font-weight:400;color:#0b3656;white-space:pre;transform:scaleX(0.8678);transform-origin:0 0;">LOS</div><div style="position:absolute;left:1341.00px;top:362.19px;font-size:17.5px;line-height:17.5px;font-weight:400;color:#0b3656;white-space:pre;transform:scaleX(1.0101);transform-origin:0 0;">121.799079</div><div style="position:absolute;left:1458.40px;top:362.19px;font-size:17.5px;line-height:17.5px;font-weight:400;color:#0b3656;white-space:pre;transform:scaleX(1.0137);transform-origin:0 0;">9.750327</div><div style="position:absolute;left:1629.67px;top:362.19px;font-size:17.5px;line-height:17.5px;font-weight:400;color:#0b3656;white-space:pre;">8</div><div style="position:absolute;left:1734.93px;top:362.19px;font-size:17.5px;line-height:17.5px;font-weight:400;color:#0b3656;white-space:pre;">13</div><div style="position:absolute;left:109.20px;top:388.19px;font-size:17.5px;line-height:17.5px;font-weight:400;color:#0b3656;white-space:pre;">163</div><div style="position:absolute;left:142px;top:0;width:169px;height:986px;overflow:hidden"><div style="position:absolute;left:-142px;top:0"><div style="position:absolute;left:146.60px;top:388.19px;font-size:17.5px;line-height:17.5px;font-weight:400;color:#0b3656;white-space:pre;transform:scaleX(0.9347);transform-origin:0 0;">MACRO CELL GNB O</div></div></div><div style="position:absolute;left:315.60px;top:388.19px;font-size:17.5px;line-height:17.5px;font-weight:400;color:#0b3656;white-space:pre;transform:scaleX(0.8908);transform-origin:0 0;">UE_1</div><div style="position:absolute;left:503.10px;top:388.19px;font-size:17.5px;line-height:17.5px;font-weight:400;color:#0b3656;white-space:pre;transform:scaleX(0.9836);transform-origin:0 0;">1900</div><div style="position:absolute;left:591.50px;top:388.19px;font-size:17.5px;line-height:17.5px;font-weight:400;color:#0b3656;white-space:pre;transform:scaleX(0.8396);transform-origin:0 0;">TRUE</div><div style="position:absolute;left:750.67px;top:388.19px;font-size:17.5px;line-height:17.5px;font-weight:400;color:#0b3656;white-space:pre;">1</div><div style="position:absolute;left:768.60px;top:388.19px;font-size:17.5px;line-height:17.5px;font-weight:400;color:#0b3656;white-space:pre;transform:scaleX(0.9759);transform-origin:0 0;">n78</div><div style="position:absolute;left:854.60px;top:388.19px;font-size:17.5px;line-height:17.5px;font-weight:400;color:#0b3656;white-space:pre;transform:scaleX(0.9467);transform-origin:0 0;">PDSCH</div><div style="position:absolute;left:1028.67px;top:388.19px;font-size:17.5px;line-height:17.5px;font-weight:400;color:#0b3656;white-space:pre;">1</div><div style="position:absolute;left:1173.93px;top:388.19px;font-size:17.5px;line-height:17.5px;font-weight:400;color:#0b3656;white-space:pre;">40</div><div style="position:absolute;left:1201.60px;top:388.19px;font-size:17.5px;line-height:17.5px;font-weight:400;color:#0b3656;white-space:pre;transform:scaleX(0.8678);transform-origin:0 0;">LOS</div><div style="position:absolute;left:1341.00px;top:388.19px;font-size:17.5px;line-height:17.5px;font-weight:400;color:#0b3656;white-space:pre;transform:scaleX(1.0101);transform-origin:0 0;">121.799079</div><div style="position:absolute;left:1458.40px;top:388.19px;font-size:17.5px;line-height:17.5px;font-weight:400;color:#0b3656;white-space:pre;transform:scaleX(1.0137);transform-origin:0 0;">9.750327</div><div style="position:absolute;left:1629.67px;top:388.19px;font-size:17.5px;line-height:17.5px;font-weight:400;color:#0b3656;white-space:pre;">8</div><div style="position:absolute;left:1734.93px;top:388.19px;font-size:17.5px;line-height:17.5px;font-weight:400;color:#0b3656;white-space:pre;">13</div><div style="position:absolute;left:94.60px;top:414.19px;font-size:17.5px;line-height:17.5px;font-weight:400;color:#0b3656;white-space:pre;">163.5</div><div style="position:absolute;left:142px;top:0;width:169px;height:986px;overflow:hidden"><div style="position:absolute;left:-142px;top:0"><div style="position:absolute;left:146.60px;top:414.19px;font-size:17.5px;line-height:17.5px;font-weight:400;color:#0b3656;white-space:pre;transform:scaleX(0.9347);transform-origin:0 0;">MACRO CELL GNB O</div></div></div><div style="position:absolute;left:315.60px;top:414.19px;font-size:17.5px;line-height:17.5px;font-weight:400;color:#0b3656;white-space:pre;transform:scaleX(0.8908);transform-origin:0 0;">UE_1</div><div style="position:absolute;left:503.10px;top:414.19px;font-size:17.5px;line-height:17.5px;font-weight:400;color:#0b3656;white-space:pre;transform:scaleX(0.9836);transform-origin:0 0;">1900</div><div style="position:absolute;left:591.50px;top:414.19px;font-size:17.5px;line-height:17.5px;font-weight:400;color:#0b3656;white-space:pre;transform:scaleX(0.8396);transform-origin:0 0;">TRUE</div><div style="position:absolute;left:750.67px;top:414.19px;font-size:17.5px;line-height:17.5px;font-weight:400;color:#0b3656;white-space:pre;">1</div><div style="position:absolute;left:768.60px;top:414.19px;font-size:17.5px;line-height:17.5px;font-weight:400;color:#0b3656;white-space:pre;transform:scaleX(0.9759);transform-origin:0 0;">n78</div><div style="position:absolute;left:854.60px;top:414.19px;font-size:17.5px;line-height:17.5px;font-weight:400;color:#0b3656;white-space:pre;transform:scaleX(0.9467);transform-origin:0 0;">PDSCH</div><div style="position:absolute;left:1028.67px;top:414.19px;font-size:17.5px;line-height:17.5px;font-weight:400;color:#0b3656;white-space:pre;">1</div><div style="position:absolute;left:1173.93px;top:414.19px;font-size:17.5px;line-height:17.5px;font-weight:400;color:#0b3656;white-space:pre;">40</div><div style="position:absolute;left:1201.60px;top:414.19px;font-size:17.5px;line-height:17.5px;font-weight:400;color:#0b3656;white-space:pre;transform:scaleX(0.8678);transform-origin:0 0;">LOS</div><div style="position:absolute;left:1341.00px;top:414.19px;font-size:17.5px;line-height:17.5px;font-weight:400;color:#0b3656;white-space:pre;transform:scaleX(1.0101);transform-origin:0 0;">121.799079</div><div style="position:absolute;left:1458.40px;top:414.19px;font-size:17.5px;line-height:17.5px;font-weight:400;color:#0b3656;white-space:pre;transform:scaleX(1.0137);transform-origin:0 0;">9.750327</div><div style="position:absolute;left:1629.67px;top:414.19px;font-size:17.5px;line-height:17.5px;font-weight:400;color:#0b3656;white-space:pre;">8</div><div style="position:absolute;left:1734.93px;top:414.19px;font-size:17.5px;line-height:17.5px;font-weight:400;color:#0b3656;white-space:pre;">13</div><div style="position:absolute;left:109.20px;top:440.19px;font-size:17.5px;line-height:17.5px;font-weight:400;color:#0b3656;white-space:pre;">164</div><div style="position:absolute;left:142px;top:0;width:169px;height:986px;overflow:hidden"><div style="position:absolute;left:-142px;top:0"><div style="position:absolute;left:146.60px;top:440.19px;font-size:17.5px;line-height:17.5px;font-weight:400;color:#0b3656;white-space:pre;transform:scaleX(0.9347);transform-origin:0 0;">MACRO CELL GNB O</div></div></div><div style="position:absolute;left:315.60px;top:440.19px;font-size:17.5px;line-height:17.5px;font-weight:400;color:#0b3656;white-space:pre;transform:scaleX(0.8908);transform-origin:0 0;">UE_1</div><div style="position:absolute;left:503.10px;top:440.19px;font-size:17.5px;line-height:17.5px;font-weight:400;color:#0b3656;white-space:pre;transform:scaleX(0.9836);transform-origin:0 0;">1900</div><div style="position:absolute;left:591.50px;top:440.19px;font-size:17.5px;line-height:17.5px;font-weight:400;color:#0b3656;white-space:pre;transform:scaleX(0.8396);transform-origin:0 0;">TRUE</div><div style="position:absolute;left:750.67px;top:440.19px;font-size:17.5px;line-height:17.5px;font-weight:400;color:#0b3656;white-space:pre;">1</div><div style="position:absolute;left:768.60px;top:440.19px;font-size:17.5px;line-height:17.5px;font-weight:400;color:#0b3656;white-space:pre;transform:scaleX(0.9759);transform-origin:0 0;">n78</div><div style="position:absolute;left:854.60px;top:440.19px;font-size:17.5px;line-height:17.5px;font-weight:400;color:#0b3656;white-space:pre;transform:scaleX(0.9467);transform-origin:0 0;">PDSCH</div><div style="position:absolute;left:1028.67px;top:440.19px;font-size:17.5px;line-height:17.5px;font-weight:400;color:#0b3656;white-space:pre;">1</div><div style="position:absolute;left:1173.93px;top:440.19px;font-size:17.5px;line-height:17.5px;font-weight:400;color:#0b3656;white-space:pre;">40</div><div style="position:absolute;left:1201.60px;top:440.19px;font-size:17.5px;line-height:17.5px;font-weight:400;color:#0b3656;white-space:pre;transform:scaleX(0.8678);transform-origin:0 0;">LOS</div><div style="position:absolute;left:1341.00px;top:440.19px;font-size:17.5px;line-height:17.5px;font-weight:400;color:#0b3656;white-space:pre;transform:scaleX(1.0101);transform-origin:0 0;">121.799079</div><div style="position:absolute;left:1458.40px;top:440.19px;font-size:17.5px;line-height:17.5px;font-weight:400;color:#0b3656;white-space:pre;transform:scaleX(1.0137);transform-origin:0 0;">9.750327</div><div style="position:absolute;left:1629.67px;top:440.19px;font-size:17.5px;line-height:17.5px;font-weight:400;color:#0b3656;white-space:pre;">8</div><div style="position:absolute;left:1734.93px;top:440.19px;font-size:17.5px;line-height:17.5px;font-weight:400;color:#0b3656;white-space:pre;">13</div><div style="position:absolute;left:94.60px;top:466.19px;font-size:17.5px;line-height:17.5px;font-weight:400;color:#0b3656;white-space:pre;">164.5</div><div style="position:absolute;left:142px;top:0;width:169px;height:986px;overflow:hidden"><div style="position:absolute;left:-142px;top:0"><div style="position:absolute;left:146.60px;top:466.19px;font-size:17.5px;line-height:17.5px;font-weight:400;color:#0b3656;white-space:pre;transform:scaleX(0.9347);transform-origin:0 0;">MACRO CELL GNB O</div></div></div><div style="position:absolute;left:315.60px;top:466.19px;font-size:17.5px;line-height:17.5px;font-weight:400;color:#0b3656;white-space:pre;transform:scaleX(0.8908);transform-origin:0 0;">UE_1</div><div style="position:absolute;left:503.10px;top:466.19px;font-size:17.5px;line-height:17.5px;font-weight:400;color:#0b3656;white-space:pre;transform:scaleX(0.9836);transform-origin:0 0;">1900</div><div style="position:absolute;left:591.50px;top:466.19px;font-size:17.5px;line-height:17.5px;font-weight:400;color:#0b3656;white-space:pre;transform:scaleX(0.8396);transform-origin:0 0;">TRUE</div><div style="position:absolute;left:750.67px;top:466.19px;font-size:17.5px;line-height:17.5px;font-weight:400;color:#0b3656;white-space:pre;">1</div><div style="position:absolute;left:768.60px;top:466.19px;font-size:17.5px;line-height:17.5px;font-weight:400;color:#0b3656;white-space:pre;transform:scaleX(0.9759);transform-origin:0 0;">n78</div><div style="position:absolute;left:854.60px;top:466.19px;font-size:17.5px;line-height:17.5px;font-weight:400;color:#0b3656;white-space:pre;transform:scaleX(0.9467);transform-origin:0 0;">PDSCH</div><div style="position:absolute;left:1028.67px;top:466.19px;font-size:17.5px;line-height:17.5px;font-weight:400;color:#0b3656;white-space:pre;">1</div><div style="position:absolute;left:1173.93px;top:466.19px;font-size:17.5px;line-height:17.5px;font-weight:400;color:#0b3656;white-space:pre;">40</div><div style="position:absolute;left:1201.60px;top:466.19px;font-size:17.5px;line-height:17.5px;font-weight:400;color:#0b3656;white-space:pre;transform:scaleX(0.8678);transform-origin:0 0;">LOS</div><div style="position:absolute;left:1341.00px;top:466.19px;font-size:17.5px;line-height:17.5px;font-weight:400;color:#0b3656;white-space:pre;transform:scaleX(1.0101);transform-origin:0 0;">121.799079</div><div style="position:absolute;left:1458.40px;top:466.19px;font-size:17.5px;line-height:17.5px;font-weight:400;color:#0b3656;white-space:pre;transform:scaleX(1.0137);transform-origin:0 0;">9.750327</div><div style="position:absolute;left:1629.67px;top:466.19px;font-size:17.5px;line-height:17.5px;font-weight:400;color:#0b3656;white-space:pre;">8</div><div style="position:absolute;left:1734.93px;top:466.19px;font-size:17.5px;line-height:17.5px;font-weight:400;color:#0b3656;white-space:pre;">13</div><div style="position:absolute;left:109.20px;top:492.19px;font-size:17.5px;line-height:17.5px;font-weight:400;color:#0b3656;white-space:pre;">165</div><div style="position:absolute;left:142px;top:0;width:169px;height:986px;overflow:hidden"><div style="position:absolute;left:-142px;top:0"><div style="position:absolute;left:146.60px;top:492.19px;font-size:17.5px;line-height:17.5px;font-weight:400;color:#0b3656;white-space:pre;transform:scaleX(0.9347);transform-origin:0 0;">MACRO CELL GNB O</div></div></div><div style="position:absolute;left:315.60px;top:492.19px;font-size:17.5px;line-height:17.5px;font-weight:400;color:#0b3656;white-space:pre;transform:scaleX(0.8908);transform-origin:0 0;">UE_1</div><div style="position:absolute;left:503.10px;top:492.19px;font-size:17.5px;line-height:17.5px;font-weight:400;color:#0b3656;white-space:pre;transform:scaleX(0.9836);transform-origin:0 0;">1900</div><div style="position:absolute;left:591.50px;top:492.19px;font-size:17.5px;line-height:17.5px;font-weight:400;color:#0b3656;white-space:pre;transform:scaleX(0.8396);transform-origin:0 0;">TRUE</div><div style="position:absolute;left:750.67px;top:492.19px;font-size:17.5px;line-height:17.5px;font-weight:400;color:#0b3656;white-space:pre;">1</div><div style="position:absolute;left:768.60px;top:492.19px;font-size:17.5px;line-height:17.5px;font-weight:400;color:#0b3656;white-space:pre;transform:scaleX(0.9759);transform-origin:0 0;">n78</div><div style="position:absolute;left:854.60px;top:492.19px;font-size:17.5px;line-height:17.5px;font-weight:400;color:#0b3656;white-space:pre;transform:scaleX(0.9467);transform-origin:0 0;">PDSCH</div><div style="position:absolute;left:1028.67px;top:492.19px;font-size:17.5px;line-height:17.5px;font-weight:400;color:#0b3656;white-space:pre;">1</div><div style="position:absolute;left:1173.93px;top:492.19px;font-size:17.5px;line-height:17.5px;font-weight:400;color:#0b3656;white-space:pre;">40</div><div style="position:absolute;left:1201.60px;top:492.19px;font-size:17.5px;line-height:17.5px;font-weight:400;color:#0b3656;white-space:pre;transform:scaleX(0.8678);transform-origin:0 0;">LOS</div><div style="position:absolute;left:1341.00px;top:492.19px;font-size:17.5px;line-height:17.5px;font-weight:400;color:#0b3656;white-space:pre;transform:scaleX(1.0101);transform-origin:0 0;">121.799079</div><div style="position:absolute;left:1458.40px;top:492.19px;font-size:17.5px;line-height:17.5px;font-weight:400;color:#0b3656;white-space:pre;transform:scaleX(1.0137);transform-origin:0 0;">9.750327</div><div style="position:absolute;left:1629.67px;top:492.19px;font-size:17.5px;line-height:17.5px;font-weight:400;color:#0b3656;white-space:pre;">8</div><div style="position:absolute;left:1734.93px;top:492.19px;font-size:17.5px;line-height:17.5px;font-weight:400;color:#0b3656;white-space:pre;">13</div><div style="position:absolute;left:94.60px;top:518.19px;font-size:17.5px;line-height:17.5px;font-weight:400;color:#0b3656;white-space:pre;">165.5</div><div style="position:absolute;left:142px;top:0;width:169px;height:986px;overflow:hidden"><div style="position:absolute;left:-142px;top:0"><div style="position:absolute;left:146.60px;top:518.19px;font-size:17.5px;line-height:17.5px;font-weight:400;color:#0b3656;white-space:pre;transform:scaleX(0.9347);transform-origin:0 0;">MACRO CELL GNB O</div></div></div><div style="position:absolute;left:315.60px;top:518.19px;font-size:17.5px;line-height:17.5px;font-weight:400;color:#0b3656;white-space:pre;transform:scaleX(0.8908);transform-origin:0 0;">UE_1</div><div style="position:absolute;left:503.10px;top:518.19px;font-size:17.5px;line-height:17.5px;font-weight:400;color:#0b3656;white-space:pre;transform:scaleX(0.9836);transform-origin:0 0;">1900</div><div style="position:absolute;left:591.50px;top:518.19px;font-size:17.5px;line-height:17.5px;font-weight:400;color:#0b3656;white-space:pre;transform:scaleX(0.8396);transform-origin:0 0;">TRUE</div><div style="position:absolute;left:750.67px;top:518.19px;font-size:17.5px;line-height:17.5px;font-weight:400;color:#0b3656;white-space:pre;">1</div><div style="position:absolute;left:768.60px;top:518.19px;font-size:17.5px;line-height:17.5px;font-weight:400;color:#0b3656;white-space:pre;transform:scaleX(0.9759);transform-origin:0 0;">n78</div><div style="position:absolute;left:854.60px;top:518.19px;font-size:17.5px;line-height:17.5px;font-weight:400;color:#0b3656;white-space:pre;transform:scaleX(0.9467);transform-origin:0 0;">PDSCH</div><div style="position:absolute;left:1028.67px;top:518.19px;font-size:17.5px;line-height:17.5px;font-weight:400;color:#0b3656;white-space:pre;">1</div><div style="position:absolute;left:1173.93px;top:518.19px;font-size:17.5px;line-height:17.5px;font-weight:400;color:#0b3656;white-space:pre;">40</div><div style="position:absolute;left:1201.60px;top:518.19px;font-size:17.5px;line-height:17.5px;font-weight:400;color:#0b3656;white-space:pre;transform:scaleX(0.8678);transform-origin:0 0;">LOS</div><div style="position:absolute;left:1341.00px;top:518.19px;font-size:17.5px;line-height:17.5px;font-weight:400;color:#0b3656;white-space:pre;transform:scaleX(1.0101);transform-origin:0 0;">121.799079</div><div style="position:absolute;left:1458.40px;top:518.19px;font-size:17.5px;line-height:17.5px;font-weight:400;color:#0b3656;white-space:pre;transform:scaleX(1.0137);transform-origin:0 0;">9.750327</div><div style="position:absolute;left:1629.67px;top:518.19px;font-size:17.5px;line-height:17.5px;font-weight:400;color:#0b3656;white-space:pre;">8</div><div style="position:absolute;left:1734.93px;top:518.19px;font-size:17.5px;line-height:17.5px;font-weight:400;color:#0b3656;white-space:pre;">13</div><div style="position:absolute;left:109.20px;top:544.19px;font-size:17.5px;line-height:17.5px;font-weight:400;color:#0b3656;white-space:pre;">166</div><div style="position:absolute;left:142px;top:0;width:169px;height:986px;overflow:hidden"><div style="position:absolute;left:-142px;top:0"><div style="position:absolute;left:146.60px;top:544.19px;font-size:17.5px;line-height:17.5px;font-weight:400;color:#0b3656;white-space:pre;transform:scaleX(0.9347);transform-origin:0 0;">MACRO CELL GNB O</div></div></div><div style="position:absolute;left:315.60px;top:544.19px;font-size:17.5px;line-height:17.5px;font-weight:400;color:#0b3656;white-space:pre;transform:scaleX(0.8908);transform-origin:0 0;">UE_1</div><div style="position:absolute;left:503.10px;top:544.19px;font-size:17.5px;line-height:17.5px;font-weight:400;color:#0b3656;white-space:pre;transform:scaleX(0.9836);transform-origin:0 0;">1900</div><div style="position:absolute;left:591.50px;top:544.19px;font-size:17.5px;line-height:17.5px;font-weight:400;color:#0b3656;white-space:pre;transform:scaleX(0.8396);transform-origin:0 0;">TRUE</div><div style="position:absolute;left:750.67px;top:544.19px;font-size:17.5px;line-height:17.5px;font-weight:400;color:#0b3656;white-space:pre;">1</div><div style="position:absolute;left:768.60px;top:544.19px;font-size:17.5px;line-height:17.5px;font-weight:400;color:#0b3656;white-space:pre;transform:scaleX(0.9759);transform-origin:0 0;">n78</div><div style="position:absolute;left:854.60px;top:544.19px;font-size:17.5px;line-height:17.5px;font-weight:400;color:#0b3656;white-space:pre;transform:scaleX(0.9467);transform-origin:0 0;">PDSCH</div><div style="position:absolute;left:1028.67px;top:544.19px;font-size:17.5px;line-height:17.5px;font-weight:400;color:#0b3656;white-space:pre;">1</div><div style="position:absolute;left:1173.93px;top:544.19px;font-size:17.5px;line-height:17.5px;font-weight:400;color:#0b3656;white-space:pre;">40</div><div style="position:absolute;left:1201.60px;top:544.19px;font-size:17.5px;line-height:17.5px;font-weight:400;color:#0b3656;white-space:pre;transform:scaleX(0.8678);transform-origin:0 0;">LOS</div><div style="position:absolute;left:1341.00px;top:544.19px;font-size:17.5px;line-height:17.5px;font-weight:400;color:#0b3656;white-space:pre;transform:scaleX(1.0101);transform-origin:0 0;">121.799079</div><div style="position:absolute;left:1458.40px;top:544.19px;font-size:17.5px;line-height:17.5px;font-weight:400;color:#0b3656;white-space:pre;transform:scaleX(1.0137);transform-origin:0 0;">9.750327</div><div style="position:absolute;left:1629.67px;top:544.19px;font-size:17.5px;line-height:17.5px;font-weight:400;color:#0b3656;white-space:pre;">8</div><div style="position:absolute;left:1734.93px;top:544.19px;font-size:17.5px;line-height:17.5px;font-weight:400;color:#0b3656;white-space:pre;">13</div><div style="position:absolute;left:94.60px;top:570.19px;font-size:17.5px;line-height:17.5px;font-weight:400;color:#0b3656;white-space:pre;">166.5</div><div style="position:absolute;left:142px;top:0;width:169px;height:986px;overflow:hidden"><div style="position:absolute;left:-142px;top:0"><div style="position:absolute;left:146.60px;top:570.19px;font-size:17.5px;line-height:17.5px;font-weight:400;color:#0b3656;white-space:pre;transform:scaleX(0.9347);transform-origin:0 0;">MACRO CELL GNB O</div></div></div><div style="position:absolute;left:315.60px;top:570.19px;font-size:17.5px;line-height:17.5px;font-weight:400;color:#0b3656;white-space:pre;transform:scaleX(0.8908);transform-origin:0 0;">UE_1</div><div style="position:absolute;left:503.10px;top:570.19px;font-size:17.5px;line-height:17.5px;font-weight:400;color:#0b3656;white-space:pre;transform:scaleX(0.9836);transform-origin:0 0;">1900</div><div style="position:absolute;left:591.50px;top:570.19px;font-size:17.5px;line-height:17.5px;font-weight:400;color:#0b3656;white-space:pre;transform:scaleX(0.8396);transform-origin:0 0;">TRUE</div><div style="position:absolute;left:750.67px;top:570.19px;font-size:17.5px;line-height:17.5px;font-weight:400;color:#0b3656;white-space:pre;">1</div><div style="position:absolute;left:768.60px;top:570.19px;font-size:17.5px;line-height:17.5px;font-weight:400;color:#0b3656;white-space:pre;transform:scaleX(0.9759);transform-origin:0 0;">n78</div><div style="position:absolute;left:854.60px;top:570.19px;font-size:17.5px;line-height:17.5px;font-weight:400;color:#0b3656;white-space:pre;transform:scaleX(0.9467);transform-origin:0 0;">PDSCH</div><div style="position:absolute;left:1028.67px;top:570.19px;font-size:17.5px;line-height:17.5px;font-weight:400;color:#0b3656;white-space:pre;">1</div><div style="position:absolute;left:1173.93px;top:570.19px;font-size:17.5px;line-height:17.5px;font-weight:400;color:#0b3656;white-space:pre;">40</div><div style="position:absolute;left:1201.60px;top:570.19px;font-size:17.5px;line-height:17.5px;font-weight:400;color:#0b3656;white-space:pre;transform:scaleX(0.8678);transform-origin:0 0;">LOS</div><div style="position:absolute;left:1341.00px;top:570.19px;font-size:17.5px;line-height:17.5px;font-weight:400;color:#0b3656;white-space:pre;transform:scaleX(1.0101);transform-origin:0 0;">121.799079</div><div style="position:absolute;left:1458.40px;top:570.19px;font-size:17.5px;line-height:17.5px;font-weight:400;color:#0b3656;white-space:pre;transform:scaleX(1.0137);transform-origin:0 0;">9.750327</div><div style="position:absolute;left:1629.67px;top:570.19px;font-size:17.5px;line-height:17.5px;font-weight:400;color:#0b3656;white-space:pre;">8</div><div style="position:absolute;left:1734.93px;top:570.19px;font-size:17.5px;line-height:17.5px;font-weight:400;color:#0b3656;white-space:pre;">13</div><div style="position:absolute;left:109.20px;top:596.19px;font-size:17.5px;line-height:17.5px;font-weight:400;color:#0b3656;white-space:pre;">167</div><div style="position:absolute;left:142px;top:0;width:169px;height:986px;overflow:hidden"><div style="position:absolute;left:-142px;top:0"><div style="position:absolute;left:146.60px;top:596.19px;font-size:17.5px;line-height:17.5px;font-weight:400;color:#0b3656;white-space:pre;transform:scaleX(0.9347);transform-origin:0 0;">MACRO CELL GNB O</div></div></div><div style="position:absolute;left:315.60px;top:596.19px;font-size:17.5px;line-height:17.5px;font-weight:400;color:#0b3656;white-space:pre;transform:scaleX(0.8908);transform-origin:0 0;">UE_1</div><div style="position:absolute;left:503.10px;top:596.19px;font-size:17.5px;line-height:17.5px;font-weight:400;color:#0b3656;white-space:pre;transform:scaleX(0.9836);transform-origin:0 0;">1900</div><div style="position:absolute;left:591.50px;top:596.19px;font-size:17.5px;line-height:17.5px;font-weight:400;color:#0b3656;white-space:pre;transform:scaleX(0.8396);transform-origin:0 0;">TRUE</div><div style="position:absolute;left:750.67px;top:596.19px;font-size:17.5px;line-height:17.5px;font-weight:400;color:#0b3656;white-space:pre;">1</div><div style="position:absolute;left:768.60px;top:596.19px;font-size:17.5px;line-height:17.5px;font-weight:400;color:#0b3656;white-space:pre;transform:scaleX(0.9759);transform-origin:0 0;">n78</div><div style="position:absolute;left:854.60px;top:596.19px;font-size:17.5px;line-height:17.5px;font-weight:400;color:#0b3656;white-space:pre;transform:scaleX(0.9467);transform-origin:0 0;">PDSCH</div><div style="position:absolute;left:1028.67px;top:596.19px;font-size:17.5px;line-height:17.5px;font-weight:400;color:#0b3656;white-space:pre;">1</div><div style="position:absolute;left:1173.93px;top:596.19px;font-size:17.5px;line-height:17.5px;font-weight:400;color:#0b3656;white-space:pre;">40</div><div style="position:absolute;left:1201.60px;top:596.19px;font-size:17.5px;line-height:17.5px;font-weight:400;color:#0b3656;white-space:pre;transform:scaleX(0.8678);transform-origin:0 0;">LOS</div><div style="position:absolute;left:1341.00px;top:596.19px;font-size:17.5px;line-height:17.5px;font-weight:400;color:#0b3656;white-space:pre;transform:scaleX(1.0101);transform-origin:0 0;">121.799079</div><div style="position:absolute;left:1458.40px;top:596.19px;font-size:17.5px;line-height:17.5px;font-weight:400;color:#0b3656;white-space:pre;transform:scaleX(1.0137);transform-origin:0 0;">9.750327</div><div style="position:absolute;left:1629.67px;top:596.19px;font-size:17.5px;line-height:17.5px;font-weight:400;color:#0b3656;white-space:pre;">8</div><div style="position:absolute;left:1734.93px;top:596.19px;font-size:17.5px;line-height:17.5px;font-weight:400;color:#0b3656;white-space:pre;">13</div><div style="position:absolute;left:94.60px;top:622.19px;font-size:17.5px;line-height:17.5px;font-weight:400;color:#0b3656;white-space:pre;">167.5</div><div style="position:absolute;left:142px;top:0;width:169px;height:986px;overflow:hidden"><div style="position:absolute;left:-142px;top:0"><div style="position:absolute;left:146.60px;top:622.19px;font-size:17.5px;line-height:17.5px;font-weight:400;color:#0b3656;white-space:pre;transform:scaleX(0.9347);transform-origin:0 0;">MACRO CELL GNB O</div></div></div><div style="position:absolute;left:315.60px;top:622.19px;font-size:17.5px;line-height:17.5px;font-weight:400;color:#0b3656;white-space:pre;transform:scaleX(0.8908);transform-origin:0 0;">UE_1</div><div style="position:absolute;left:503.10px;top:622.19px;font-size:17.5px;line-height:17.5px;font-weight:400;color:#0b3656;white-space:pre;transform:scaleX(0.9836);transform-origin:0 0;">1900</div><div style="position:absolute;left:591.50px;top:622.19px;font-size:17.5px;line-height:17.5px;font-weight:400;color:#0b3656;white-space:pre;transform:scaleX(0.8396);transform-origin:0 0;">TRUE</div><div style="position:absolute;left:750.67px;top:622.19px;font-size:17.5px;line-height:17.5px;font-weight:400;color:#0b3656;white-space:pre;">1</div><div style="position:absolute;left:768.60px;top:622.19px;font-size:17.5px;line-height:17.5px;font-weight:400;color:#0b3656;white-space:pre;transform:scaleX(0.9759);transform-origin:0 0;">n78</div><div style="position:absolute;left:854.60px;top:622.19px;font-size:17.5px;line-height:17.5px;font-weight:400;color:#0b3656;white-space:pre;transform:scaleX(0.9467);transform-origin:0 0;">PDSCH</div><div style="position:absolute;left:1028.67px;top:622.19px;font-size:17.5px;line-height:17.5px;font-weight:400;color:#0b3656;white-space:pre;">1</div><div style="position:absolute;left:1173.93px;top:622.19px;font-size:17.5px;line-height:17.5px;font-weight:400;color:#0b3656;white-space:pre;">40</div><div style="position:absolute;left:1201.60px;top:622.19px;font-size:17.5px;line-height:17.5px;font-weight:400;color:#0b3656;white-space:pre;transform:scaleX(0.8678);transform-origin:0 0;">LOS</div><div style="position:absolute;left:1341.00px;top:622.19px;font-size:17.5px;line-height:17.5px;font-weight:400;color:#0b3656;white-space:pre;transform:scaleX(1.0101);transform-origin:0 0;">121.799079</div><div style="position:absolute;left:1458.40px;top:622.19px;font-size:17.5px;line-height:17.5px;font-weight:400;color:#0b3656;white-space:pre;transform:scaleX(1.0137);transform-origin:0 0;">9.750327</div><div style="position:absolute;left:1629.67px;top:622.19px;font-size:17.5px;line-height:17.5px;font-weight:400;color:#0b3656;white-space:pre;">8</div><div style="position:absolute;left:1734.93px;top:622.19px;font-size:17.5px;line-height:17.5px;font-weight:400;color:#0b3656;white-space:pre;">13</div><div style="position:absolute;left:109.20px;top:648.19px;font-size:17.5px;line-height:17.5px;font-weight:400;color:#0b3656;white-space:pre;">168</div><div style="position:absolute;left:142px;top:0;width:169px;height:986px;overflow:hidden"><div style="position:absolute;left:-142px;top:0"><div style="position:absolute;left:146.60px;top:648.19px;font-size:17.5px;line-height:17.5px;font-weight:400;color:#0b3656;white-space:pre;transform:scaleX(0.9347);transform-origin:0 0;">MACRO CELL GNB O</div></div></div><div style="position:absolute;left:315.60px;top:648.19px;font-size:17.5px;line-height:17.5px;font-weight:400;color:#0b3656;white-space:pre;transform:scaleX(0.8908);transform-origin:0 0;">UE_1</div><div style="position:absolute;left:503.10px;top:648.19px;font-size:17.5px;line-height:17.5px;font-weight:400;color:#0b3656;white-space:pre;transform:scaleX(0.9836);transform-origin:0 0;">1900</div><div style="position:absolute;left:591.50px;top:648.19px;font-size:17.5px;line-height:17.5px;font-weight:400;color:#0b3656;white-space:pre;transform:scaleX(0.8396);transform-origin:0 0;">TRUE</div><div style="position:absolute;left:750.67px;top:648.19px;font-size:17.5px;line-height:17.5px;font-weight:400;color:#0b3656;white-space:pre;">1</div><div style="position:absolute;left:768.60px;top:648.19px;font-size:17.5px;line-height:17.5px;font-weight:400;color:#0b3656;white-space:pre;transform:scaleX(0.9759);transform-origin:0 0;">n78</div><div style="position:absolute;left:854.60px;top:648.19px;font-size:17.5px;line-height:17.5px;font-weight:400;color:#0b3656;white-space:pre;transform:scaleX(0.9467);transform-origin:0 0;">PDSCH</div><div style="position:absolute;left:1028.67px;top:648.19px;font-size:17.5px;line-height:17.5px;font-weight:400;color:#0b3656;white-space:pre;">1</div><div style="position:absolute;left:1173.93px;top:648.19px;font-size:17.5px;line-height:17.5px;font-weight:400;color:#0b3656;white-space:pre;">40</div><div style="position:absolute;left:1201.60px;top:648.19px;font-size:17.5px;line-height:17.5px;font-weight:400;color:#0b3656;white-space:pre;transform:scaleX(0.8678);transform-origin:0 0;">LOS</div><div style="position:absolute;left:1341.00px;top:648.19px;font-size:17.5px;line-height:17.5px;font-weight:400;color:#0b3656;white-space:pre;transform:scaleX(1.0101);transform-origin:0 0;">121.799079</div><div style="position:absolute;left:1458.40px;top:648.19px;font-size:17.5px;line-height:17.5px;font-weight:400;color:#0b3656;white-space:pre;transform:scaleX(1.0137);transform-origin:0 0;">9.750327</div><div style="position:absolute;left:1629.67px;top:648.19px;font-size:17.5px;line-height:17.5px;font-weight:400;color:#0b3656;white-space:pre;">8</div><div style="position:absolute;left:1734.93px;top:648.19px;font-size:17.5px;line-height:17.5px;font-weight:400;color:#0b3656;white-space:pre;">13</div><div style="position:absolute;left:94.60px;top:674.19px;font-size:17.5px;line-height:17.5px;font-weight:400;color:#0b3656;white-space:pre;">168.5</div><div style="position:absolute;left:142px;top:0;width:169px;height:986px;overflow:hidden"><div style="position:absolute;left:-142px;top:0"><div style="position:absolute;left:146.60px;top:674.19px;font-size:17.5px;line-height:17.5px;font-weight:400;color:#0b3656;white-space:pre;transform:scaleX(0.9347);transform-origin:0 0;">MACRO CELL GNB O</div></div></div><div style="position:absolute;left:315.60px;top:674.19px;font-size:17.5px;line-height:17.5px;font-weight:400;color:#0b3656;white-space:pre;transform:scaleX(0.8908);transform-origin:0 0;">UE_1</div><div style="position:absolute;left:503.10px;top:674.19px;font-size:17.5px;line-height:17.5px;font-weight:400;color:#0b3656;white-space:pre;transform:scaleX(0.9836);transform-origin:0 0;">1900</div><div style="position:absolute;left:591.50px;top:674.19px;font-size:17.5px;line-height:17.5px;font-weight:400;color:#0b3656;white-space:pre;transform:scaleX(0.8396);transform-origin:0 0;">TRUE</div><div style="position:absolute;left:750.67px;top:674.19px;font-size:17.5px;line-height:17.5px;font-weight:400;color:#0b3656;white-space:pre;">1</div><div style="position:absolute;left:768.60px;top:674.19px;font-size:17.5px;line-height:17.5px;font-weight:400;color:#0b3656;white-space:pre;transform:scaleX(0.9759);transform-origin:0 0;">n78</div><div style="position:absolute;left:854.60px;top:674.19px;font-size:17.5px;line-height:17.5px;font-weight:400;color:#0b3656;white-space:pre;transform:scaleX(0.9467);transform-origin:0 0;">PDSCH</div><div style="position:absolute;left:1028.67px;top:674.19px;font-size:17.5px;line-height:17.5px;font-weight:400;color:#0b3656;white-space:pre;">1</div><div style="position:absolute;left:1173.93px;top:674.19px;font-size:17.5px;line-height:17.5px;font-weight:400;color:#0b3656;white-space:pre;">40</div><div style="position:absolute;left:1201.60px;top:674.19px;font-size:17.5px;line-height:17.5px;font-weight:400;color:#0b3656;white-space:pre;transform:scaleX(0.8678);transform-origin:0 0;">LOS</div><div style="position:absolute;left:1341.00px;top:674.19px;font-size:17.5px;line-height:17.5px;font-weight:400;color:#0b3656;white-space:pre;transform:scaleX(1.0101);transform-origin:0 0;">121.799079</div><div style="position:absolute;left:1458.40px;top:674.19px;font-size:17.5px;line-height:17.5px;font-weight:400;color:#0b3656;white-space:pre;transform:scaleX(1.0137);transform-origin:0 0;">9.750327</div><div style="position:absolute;left:1629.67px;top:674.19px;font-size:17.5px;line-height:17.5px;font-weight:400;color:#0b3656;white-space:pre;">8</div><div style="position:absolute;left:1734.93px;top:674.19px;font-size:17.5px;line-height:17.5px;font-weight:400;color:#0b3656;white-space:pre;">13</div><div style="position:absolute;left:109.20px;top:700.19px;font-size:17.5px;line-height:17.5px;font-weight:400;color:#0b3656;white-space:pre;">169</div><div style="position:absolute;left:142px;top:0;width:169px;height:986px;overflow:hidden"><div style="position:absolute;left:-142px;top:0"><div style="position:absolute;left:146.60px;top:700.19px;font-size:17.5px;line-height:17.5px;font-weight:400;color:#0b3656;white-space:pre;transform:scaleX(0.9347);transform-origin:0 0;">MACRO CELL GNB O</div></div></div><div style="position:absolute;left:315.60px;top:700.19px;font-size:17.5px;line-height:17.5px;font-weight:400;color:#0b3656;white-space:pre;transform:scaleX(0.8908);transform-origin:0 0;">UE_1</div><div style="position:absolute;left:503.10px;top:700.19px;font-size:17.5px;line-height:17.5px;font-weight:400;color:#0b3656;white-space:pre;transform:scaleX(0.9836);transform-origin:0 0;">1900</div><div style="position:absolute;left:591.50px;top:700.19px;font-size:17.5px;line-height:17.5px;font-weight:400;color:#0b3656;white-space:pre;transform:scaleX(0.8396);transform-origin:0 0;">TRUE</div><div style="position:absolute;left:750.67px;top:700.19px;font-size:17.5px;line-height:17.5px;font-weight:400;color:#0b3656;white-space:pre;">1</div><div style="position:absolute;left:768.60px;top:700.19px;font-size:17.5px;line-height:17.5px;font-weight:400;color:#0b3656;white-space:pre;transform:scaleX(0.9759);transform-origin:0 0;">n78</div><div style="position:absolute;left:854.60px;top:700.19px;font-size:17.5px;line-height:17.5px;font-weight:400;color:#0b3656;white-space:pre;transform:scaleX(0.9467);transform-origin:0 0;">PDSCH</div><div style="position:absolute;left:1028.67px;top:700.19px;font-size:17.5px;line-height:17.5px;font-weight:400;color:#0b3656;white-space:pre;">1</div><div style="position:absolute;left:1173.93px;top:700.19px;font-size:17.5px;line-height:17.5px;font-weight:400;color:#0b3656;white-space:pre;">40</div><div style="position:absolute;left:1201.60px;top:700.19px;font-size:17.5px;line-height:17.5px;font-weight:400;color:#0b3656;white-space:pre;transform:scaleX(0.8678);transform-origin:0 0;">LOS</div><div style="position:absolute;left:1341.00px;top:700.19px;font-size:17.5px;line-height:17.5px;font-weight:400;color:#0b3656;white-space:pre;transform:scaleX(1.0101);transform-origin:0 0;">121.799079</div><div style="position:absolute;left:1458.40px;top:700.19px;font-size:17.5px;line-height:17.5px;font-weight:400;color:#0b3656;white-space:pre;transform:scaleX(1.0137);transform-origin:0 0;">9.750327</div><div style="position:absolute;left:1629.67px;top:700.19px;font-size:17.5px;line-height:17.5px;font-weight:400;color:#0b3656;white-space:pre;">8</div><div style="position:absolute;left:1734.93px;top:700.19px;font-size:17.5px;line-height:17.5px;font-weight:400;color:#0b3656;white-space:pre;">13</div><div style="position:absolute;left:94.60px;top:726.19px;font-size:17.5px;line-height:17.5px;font-weight:400;color:#0b3656;white-space:pre;">169.5</div><div style="position:absolute;left:142px;top:0;width:169px;height:986px;overflow:hidden"><div style="position:absolute;left:-142px;top:0"><div style="position:absolute;left:146.60px;top:726.19px;font-size:17.5px;line-height:17.5px;font-weight:400;color:#0b3656;white-space:pre;transform:scaleX(0.9347);transform-origin:0 0;">MACRO CELL GNB O</div></div></div><div style="position:absolute;left:315.60px;top:726.19px;font-size:17.5px;line-height:17.5px;font-weight:400;color:#0b3656;white-space:pre;transform:scaleX(0.8908);transform-origin:0 0;">UE_1</div><div style="position:absolute;left:503.10px;top:726.19px;font-size:17.5px;line-height:17.5px;font-weight:400;color:#0b3656;white-space:pre;transform:scaleX(0.9836);transform-origin:0 0;">1900</div><div style="position:absolute;left:591.50px;top:726.19px;font-size:17.5px;line-height:17.5px;font-weight:400;color:#0b3656;white-space:pre;transform:scaleX(0.8396);transform-origin:0 0;">TRUE</div><div style="position:absolute;left:750.67px;top:726.19px;font-size:17.5px;line-height:17.5px;font-weight:400;color:#0b3656;white-space:pre;">1</div><div style="position:absolute;left:768.60px;top:726.19px;font-size:17.5px;line-height:17.5px;font-weight:400;color:#0b3656;white-space:pre;transform:scaleX(0.9759);transform-origin:0 0;">n78</div><div style="position:absolute;left:854.60px;top:726.19px;font-size:17.5px;line-height:17.5px;font-weight:400;color:#0b3656;white-space:pre;transform:scaleX(0.9467);transform-origin:0 0;">PDSCH</div><div style="position:absolute;left:1028.67px;top:726.19px;font-size:17.5px;line-height:17.5px;font-weight:400;color:#0b3656;white-space:pre;">1</div><div style="position:absolute;left:1173.93px;top:726.19px;font-size:17.5px;line-height:17.5px;font-weight:400;color:#0b3656;white-space:pre;">40</div><div style="position:absolute;left:1201.60px;top:726.19px;font-size:17.5px;line-height:17.5px;font-weight:400;color:#0b3656;white-space:pre;transform:scaleX(0.8678);transform-origin:0 0;">LOS</div><div style="position:absolute;left:1341.00px;top:726.19px;font-size:17.5px;line-height:17.5px;font-weight:400;color:#0b3656;white-space:pre;transform:scaleX(1.0101);transform-origin:0 0;">121.799079</div><div style="position:absolute;left:1458.40px;top:726.19px;font-size:17.5px;line-height:17.5px;font-weight:400;color:#0b3656;white-space:pre;transform:scaleX(1.0137);transform-origin:0 0;">9.750327</div><div style="position:absolute;left:1629.67px;top:726.19px;font-size:17.5px;line-height:17.5px;font-weight:400;color:#0b3656;white-space:pre;">8</div><div style="position:absolute;left:1734.93px;top:726.19px;font-size:17.5px;line-height:17.5px;font-weight:400;color:#0b3656;white-space:pre;">13</div><div style="position:absolute;left:109.20px;top:752.19px;font-size:17.5px;line-height:17.5px;font-weight:400;color:#0b3656;white-space:pre;">170</div><div style="position:absolute;left:142px;top:0;width:169px;height:986px;overflow:hidden"><div style="position:absolute;left:-142px;top:0"><div style="position:absolute;left:146.60px;top:752.19px;font-size:17.5px;line-height:17.5px;font-weight:400;color:#0b3656;white-space:pre;transform:scaleX(0.9347);transform-origin:0 0;">MACRO CELL GNB O</div></div></div><div style="position:absolute;left:315.60px;top:752.19px;font-size:17.5px;line-height:17.5px;font-weight:400;color:#0b3656;white-space:pre;transform:scaleX(0.8908);transform-origin:0 0;">UE_1</div><div style="position:absolute;left:503.10px;top:752.19px;font-size:17.5px;line-height:17.5px;font-weight:400;color:#0b3656;white-space:pre;transform:scaleX(0.9836);transform-origin:0 0;">1900</div><div style="position:absolute;left:591.50px;top:752.19px;font-size:17.5px;line-height:17.5px;font-weight:400;color:#0b3656;white-space:pre;transform:scaleX(0.8396);transform-origin:0 0;">TRUE</div><div style="position:absolute;left:750.67px;top:752.19px;font-size:17.5px;line-height:17.5px;font-weight:400;color:#0b3656;white-space:pre;">1</div><div style="position:absolute;left:768.60px;top:752.19px;font-size:17.5px;line-height:17.5px;font-weight:400;color:#0b3656;white-space:pre;transform:scaleX(0.9759);transform-origin:0 0;">n78</div><div style="position:absolute;left:854.60px;top:752.19px;font-size:17.5px;line-height:17.5px;font-weight:400;color:#0b3656;white-space:pre;transform:scaleX(0.9467);transform-origin:0 0;">PDSCH</div><div style="position:absolute;left:1028.67px;top:752.19px;font-size:17.5px;line-height:17.5px;font-weight:400;color:#0b3656;white-space:pre;">1</div><div style="position:absolute;left:1173.93px;top:752.19px;font-size:17.5px;line-height:17.5px;font-weight:400;color:#0b3656;white-space:pre;">40</div><div style="position:absolute;left:1201.60px;top:752.19px;font-size:17.5px;line-height:17.5px;font-weight:400;color:#0b3656;white-space:pre;transform:scaleX(0.8678);transform-origin:0 0;">LOS</div><div style="position:absolute;left:1341.00px;top:752.19px;font-size:17.5px;line-height:17.5px;font-weight:400;color:#0b3656;white-space:pre;transform:scaleX(1.0101);transform-origin:0 0;">121.799079</div><div style="position:absolute;left:1458.40px;top:752.19px;font-size:17.5px;line-height:17.5px;font-weight:400;color:#0b3656;white-space:pre;transform:scaleX(1.0137);transform-origin:0 0;">9.750327</div><div style="position:absolute;left:1629.67px;top:752.19px;font-size:17.5px;line-height:17.5px;font-weight:400;color:#0b3656;white-space:pre;">8</div><div style="position:absolute;left:1734.93px;top:752.19px;font-size:17.5px;line-height:17.5px;font-weight:400;color:#0b3656;white-space:pre;">13</div><div style="position:absolute;left:94.60px;top:778.19px;font-size:17.5px;line-height:17.5px;font-weight:400;color:#0b3656;white-space:pre;">170.5</div><div style="position:absolute;left:142px;top:0;width:169px;height:986px;overflow:hidden"><div style="position:absolute;left:-142px;top:0"><div style="position:absolute;left:146.60px;top:778.19px;font-size:17.5px;line-height:17.5px;font-weight:400;color:#0b3656;white-space:pre;transform:scaleX(0.9347);transform-origin:0 0;">MACRO CELL GNB O</div></div></div><div style="position:absolute;left:315.60px;top:778.19px;font-size:17.5px;line-height:17.5px;font-weight:400;color:#0b3656;white-space:pre;transform:scaleX(0.8908);transform-origin:0 0;">UE_1</div><div style="position:absolute;left:503.10px;top:778.19px;font-size:17.5px;line-height:17.5px;font-weight:400;color:#0b3656;white-space:pre;transform:scaleX(0.9836);transform-origin:0 0;">1900</div><div style="position:absolute;left:591.50px;top:778.19px;font-size:17.5px;line-height:17.5px;font-weight:400;color:#0b3656;white-space:pre;transform:scaleX(0.8396);transform-origin:0 0;">TRUE</div><div style="position:absolute;left:750.67px;top:778.19px;font-size:17.5px;line-height:17.5px;font-weight:400;color:#0b3656;white-space:pre;">1</div><div style="position:absolute;left:768.60px;top:778.19px;font-size:17.5px;line-height:17.5px;font-weight:400;color:#0b3656;white-space:pre;transform:scaleX(0.9759);transform-origin:0 0;">n78</div><div style="position:absolute;left:854.60px;top:778.19px;font-size:17.5px;line-height:17.5px;font-weight:400;color:#0b3656;white-space:pre;transform:scaleX(0.9467);transform-origin:0 0;">PDSCH</div><div style="position:absolute;left:1028.67px;top:778.19px;font-size:17.5px;line-height:17.5px;font-weight:400;color:#0b3656;white-space:pre;">1</div><div style="position:absolute;left:1173.93px;top:778.19px;font-size:17.5px;line-height:17.5px;font-weight:400;color:#0b3656;white-space:pre;">40</div><div style="position:absolute;left:1201.60px;top:778.19px;font-size:17.5px;line-height:17.5px;font-weight:400;color:#0b3656;white-space:pre;transform:scaleX(0.8678);transform-origin:0 0;">LOS</div><div style="position:absolute;left:1341.00px;top:778.19px;font-size:17.5px;line-height:17.5px;font-weight:400;color:#0b3656;white-space:pre;transform:scaleX(1.0101);transform-origin:0 0;">121.799079</div><div style="position:absolute;left:1458.40px;top:778.19px;font-size:17.5px;line-height:17.5px;font-weight:400;color:#0b3656;white-space:pre;transform:scaleX(1.0137);transform-origin:0 0;">9.750327</div><div style="position:absolute;left:1629.67px;top:778.19px;font-size:17.5px;line-height:17.5px;font-weight:400;color:#0b3656;white-space:pre;">8</div><div style="position:absolute;left:1734.93px;top:778.19px;font-size:17.5px;line-height:17.5px;font-weight:400;color:#0b3656;white-space:pre;">13</div><div style="position:absolute;left:109.20px;top:804.19px;font-size:17.5px;line-height:17.5px;font-weight:400;color:#0b3656;white-space:pre;">171</div><div style="position:absolute;left:142px;top:0;width:169px;height:986px;overflow:hidden"><div style="position:absolute;left:-142px;top:0"><div style="position:absolute;left:146.60px;top:804.19px;font-size:17.5px;line-height:17.5px;font-weight:400;color:#0b3656;white-space:pre;transform:scaleX(0.9347);transform-origin:0 0;">MACRO CELL GNB O</div></div></div><div style="position:absolute;left:315.60px;top:804.19px;font-size:17.5px;line-height:17.5px;font-weight:400;color:#0b3656;white-space:pre;transform:scaleX(0.8908);transform-origin:0 0;">UE_1</div><div style="position:absolute;left:503.10px;top:804.19px;font-size:17.5px;line-height:17.5px;font-weight:400;color:#0b3656;white-space:pre;transform:scaleX(0.9836);transform-origin:0 0;">1900</div><div style="position:absolute;left:591.50px;top:804.19px;font-size:17.5px;line-height:17.5px;font-weight:400;color:#0b3656;white-space:pre;transform:scaleX(0.8396);transform-origin:0 0;">TRUE</div><div style="position:absolute;left:750.67px;top:804.19px;font-size:17.5px;line-height:17.5px;font-weight:400;color:#0b3656;white-space:pre;">1</div><div style="position:absolute;left:768.60px;top:804.19px;font-size:17.5px;line-height:17.5px;font-weight:400;color:#0b3656;white-space:pre;transform:scaleX(0.9759);transform-origin:0 0;">n78</div><div style="position:absolute;left:854.60px;top:804.19px;font-size:17.5px;line-height:17.5px;font-weight:400;color:#0b3656;white-space:pre;transform:scaleX(0.9467);transform-origin:0 0;">PDSCH</div><div style="position:absolute;left:1028.67px;top:804.19px;font-size:17.5px;line-height:17.5px;font-weight:400;color:#0b3656;white-space:pre;">1</div><div style="position:absolute;left:1173.93px;top:804.19px;font-size:17.5px;line-height:17.5px;font-weight:400;color:#0b3656;white-space:pre;">40</div><div style="position:absolute;left:1201.60px;top:804.19px;font-size:17.5px;line-height:17.5px;font-weight:400;color:#0b3656;white-space:pre;transform:scaleX(0.8678);transform-origin:0 0;">LOS</div><div style="position:absolute;left:1341.00px;top:804.19px;font-size:17.5px;line-height:17.5px;font-weight:400;color:#0b3656;white-space:pre;transform:scaleX(1.0101);transform-origin:0 0;">121.799079</div><div style="position:absolute;left:1458.40px;top:804.19px;font-size:17.5px;line-height:17.5px;font-weight:400;color:#0b3656;white-space:pre;transform:scaleX(1.0137);transform-origin:0 0;">9.750327</div><div style="position:absolute;left:1629.67px;top:804.19px;font-size:17.5px;line-height:17.5px;font-weight:400;color:#0b3656;white-space:pre;">8</div><div style="position:absolute;left:1734.93px;top:804.19px;font-size:17.5px;line-height:17.5px;font-weight:400;color:#0b3656;white-space:pre;">13</div><div style="position:absolute;left:94.60px;top:830.19px;font-size:17.5px;line-height:17.5px;font-weight:400;color:#0b3656;white-space:pre;">171.5</div><div style="position:absolute;left:142px;top:0;width:169px;height:986px;overflow:hidden"><div style="position:absolute;left:-142px;top:0"><div style="position:absolute;left:146.60px;top:830.19px;font-size:17.5px;line-height:17.5px;font-weight:400;color:#0b3656;white-space:pre;transform:scaleX(0.9347);transform-origin:0 0;">MACRO CELL GNB O</div></div></div><div style="position:absolute;left:315.60px;top:830.19px;font-size:17.5px;line-height:17.5px;font-weight:400;color:#0b3656;white-space:pre;transform:scaleX(0.8908);transform-origin:0 0;">UE_1</div><div style="position:absolute;left:503.10px;top:830.19px;font-size:17.5px;line-height:17.5px;font-weight:400;color:#0b3656;white-space:pre;transform:scaleX(0.9836);transform-origin:0 0;">1900</div><div style="position:absolute;left:591.50px;top:830.19px;font-size:17.5px;line-height:17.5px;font-weight:400;color:#0b3656;white-space:pre;transform:scaleX(0.8396);transform-origin:0 0;">TRUE</div><div style="position:absolute;left:750.67px;top:830.19px;font-size:17.5px;line-height:17.5px;font-weight:400;color:#0b3656;white-space:pre;">1</div><div style="position:absolute;left:768.60px;top:830.19px;font-size:17.5px;line-height:17.5px;font-weight:400;color:#0b3656;white-space:pre;transform:scaleX(0.9759);transform-origin:0 0;">n78</div><div style="position:absolute;left:854.60px;top:830.19px;font-size:17.5px;line-height:17.5px;font-weight:400;color:#0b3656;white-space:pre;transform:scaleX(0.9467);transform-origin:0 0;">PDSCH</div><div style="position:absolute;left:1028.67px;top:830.19px;font-size:17.5px;line-height:17.5px;font-weight:400;color:#0b3656;white-space:pre;">1</div><div style="position:absolute;left:1173.93px;top:830.19px;font-size:17.5px;line-height:17.5px;font-weight:400;color:#0b3656;white-space:pre;">40</div><div style="position:absolute;left:1201.60px;top:830.19px;font-size:17.5px;line-height:17.5px;font-weight:400;color:#0b3656;white-space:pre;transform:scaleX(0.8678);transform-origin:0 0;">LOS</div><div style="position:absolute;left:1341.00px;top:830.19px;font-size:17.5px;line-height:17.5px;font-weight:400;color:#0b3656;white-space:pre;transform:scaleX(1.0101);transform-origin:0 0;">121.799079</div><div style="position:absolute;left:1458.40px;top:830.19px;font-size:17.5px;line-height:17.5px;font-weight:400;color:#0b3656;white-space:pre;transform:scaleX(1.0137);transform-origin:0 0;">9.750327</div><div style="position:absolute;left:1629.67px;top:830.19px;font-size:17.5px;line-height:17.5px;font-weight:400;color:#0b3656;white-space:pre;">8</div><div style="position:absolute;left:1734.93px;top:830.19px;font-size:17.5px;line-height:17.5px;font-weight:400;color:#0b3656;white-space:pre;">13</div><div style="position:absolute;left:109.20px;top:856.19px;font-size:17.5px;line-height:17.5px;font-weight:400;color:#0b3656;white-space:pre;">172</div><div style="position:absolute;left:142px;top:0;width:169px;height:986px;overflow:hidden"><div style="position:absolute;left:-142px;top:0"><div style="position:absolute;left:146.60px;top:856.19px;font-size:17.5px;line-height:17.5px;font-weight:400;color:#0b3656;white-space:pre;transform:scaleX(0.9347);transform-origin:0 0;">MACRO CELL GNB O</div></div></div><div style="position:absolute;left:315.60px;top:856.19px;font-size:17.5px;line-height:17.5px;font-weight:400;color:#0b3656;white-space:pre;transform:scaleX(0.8908);transform-origin:0 0;">UE_1</div><div style="position:absolute;left:503.10px;top:856.19px;font-size:17.5px;line-height:17.5px;font-weight:400;color:#0b3656;white-space:pre;transform:scaleX(0.9836);transform-origin:0 0;">1900</div><div style="position:absolute;left:591.50px;top:856.19px;font-size:17.5px;line-height:17.5px;font-weight:400;color:#0b3656;white-space:pre;transform:scaleX(0.8396);transform-origin:0 0;">TRUE</div><div style="position:absolute;left:750.67px;top:856.19px;font-size:17.5px;line-height:17.5px;font-weight:400;color:#0b3656;white-space:pre;">1</div><div style="position:absolute;left:768.60px;top:856.19px;font-size:17.5px;line-height:17.5px;font-weight:400;color:#0b3656;white-space:pre;transform:scaleX(0.9759);transform-origin:0 0;">n78</div><div style="position:absolute;left:854.60px;top:856.19px;font-size:17.5px;line-height:17.5px;font-weight:400;color:#0b3656;white-space:pre;transform:scaleX(0.9467);transform-origin:0 0;">PDSCH</div><div style="position:absolute;left:1028.67px;top:856.19px;font-size:17.5px;line-height:17.5px;font-weight:400;color:#0b3656;white-space:pre;">1</div><div style="position:absolute;left:1173.93px;top:856.19px;font-size:17.5px;line-height:17.5px;font-weight:400;color:#0b3656;white-space:pre;">40</div><div style="position:absolute;left:1201.60px;top:856.19px;font-size:17.5px;line-height:17.5px;font-weight:400;color:#0b3656;white-space:pre;transform:scaleX(0.8678);transform-origin:0 0;">LOS</div><div style="position:absolute;left:1341.00px;top:856.19px;font-size:17.5px;line-height:17.5px;font-weight:400;color:#0b3656;white-space:pre;transform:scaleX(1.0101);transform-origin:0 0;">121.799079</div><div style="position:absolute;left:1458.40px;top:856.19px;font-size:17.5px;line-height:17.5px;font-weight:400;color:#0b3656;white-space:pre;transform:scaleX(1.0137);transform-origin:0 0;">9.750327</div><div style="position:absolute;left:1629.67px;top:856.19px;font-size:17.5px;line-height:17.5px;font-weight:400;color:#0b3656;white-space:pre;">8</div><div style="position:absolute;left:1734.93px;top:856.19px;font-size:17.5px;line-height:17.5px;font-weight:400;color:#0b3656;white-space:pre;">13</div><div style="position:absolute;left:94.60px;top:882.19px;font-size:17.5px;line-height:17.5px;font-weight:400;color:#0b3656;white-space:pre;">172.5</div><div style="position:absolute;left:142px;top:0;width:169px;height:986px;overflow:hidden"><div style="position:absolute;left:-142px;top:0"><div style="position:absolute;left:146.60px;top:882.19px;font-size:17.5px;line-height:17.5px;font-weight:400;color:#0b3656;white-space:pre;transform:scaleX(0.9347);transform-origin:0 0;">MACRO CELL GNB O</div></div></div><div style="position:absolute;left:315.60px;top:882.19px;font-size:17.5px;line-height:17.5px;font-weight:400;color:#0b3656;white-space:pre;transform:scaleX(0.8908);transform-origin:0 0;">UE_1</div><div style="position:absolute;left:503.10px;top:882.19px;font-size:17.5px;line-height:17.5px;font-weight:400;color:#0b3656;white-space:pre;transform:scaleX(0.9836);transform-origin:0 0;">1900</div><div style="position:absolute;left:591.50px;top:882.19px;font-size:17.5px;line-height:17.5px;font-weight:400;color:#0b3656;white-space:pre;transform:scaleX(0.8396);transform-origin:0 0;">TRUE</div><div style="position:absolute;left:750.67px;top:882.19px;font-size:17.5px;line-height:17.5px;font-weight:400;color:#0b3656;white-space:pre;">1</div><div style="position:absolute;left:768.60px;top:882.19px;font-size:17.5px;line-height:17.5px;font-weight:400;color:#0b3656;white-space:pre;transform:scaleX(0.9759);transform-origin:0 0;">n78</div><div style="position:absolute;left:854.60px;top:882.19px;font-size:17.5px;line-height:17.5px;font-weight:400;color:#0b3656;white-space:pre;transform:scaleX(0.9467);transform-origin:0 0;">PDSCH</div><div style="position:absolute;left:1028.67px;top:882.19px;font-size:17.5px;line-height:17.5px;font-weight:400;color:#0b3656;white-space:pre;">1</div><div style="position:absolute;left:1173.93px;top:882.19px;font-size:17.5px;line-height:17.5px;font-weight:400;color:#0b3656;white-space:pre;">40</div><div style="position:absolute;left:1201.60px;top:882.19px;font-size:17.5px;line-height:17.5px;font-weight:400;color:#0b3656;white-space:pre;transform:scaleX(0.8678);transform-origin:0 0;">LOS</div><div style="position:absolute;left:1341.00px;top:882.19px;font-size:17.5px;line-height:17.5px;font-weight:400;color:#0b3656;white-space:pre;transform:scaleX(1.0101);transform-origin:0 0;">121.799079</div><div style="position:absolute;left:1458.40px;top:882.19px;font-size:17.5px;line-height:17.5px;font-weight:400;color:#0b3656;white-space:pre;transform:scaleX(1.0137);transform-origin:0 0;">9.750327</div><div style="position:absolute;left:1629.67px;top:882.19px;font-size:17.5px;line-height:17.5px;font-weight:400;color:#0b3656;white-space:pre;">8</div><div style="position:absolute;left:1734.93px;top:882.19px;font-size:17.5px;line-height:17.5px;font-weight:400;color:#0b3656;white-space:pre;">13</div><div style="position:absolute;left:109.20px;top:908.19px;font-size:17.5px;line-height:17.5px;font-weight:400;color:#0b3656;white-space:pre;">173</div><div style="position:absolute;left:142px;top:0;width:169px;height:986px;overflow:hidden"><div style="position:absolute;left:-142px;top:0"><div style="position:absolute;left:146.60px;top:908.19px;font-size:17.5px;line-height:17.5px;font-weight:400;color:#0b3656;white-space:pre;transform:scaleX(0.9347);transform-origin:0 0;">MACRO CELL GNB O</div></div></div><div style="position:absolute;left:315.60px;top:908.19px;font-size:17.5px;line-height:17.5px;font-weight:400;color:#0b3656;white-space:pre;transform:scaleX(0.8908);transform-origin:0 0;">UE_1</div><div style="position:absolute;left:503.10px;top:908.19px;font-size:17.5px;line-height:17.5px;font-weight:400;color:#0b3656;white-space:pre;transform:scaleX(0.9836);transform-origin:0 0;">1900</div><div style="position:absolute;left:591.50px;top:908.19px;font-size:17.5px;line-height:17.5px;font-weight:400;color:#0b3656;white-space:pre;transform:scaleX(0.8396);transform-origin:0 0;">TRUE</div><div style="position:absolute;left:750.67px;top:908.19px;font-size:17.5px;line-height:17.5px;font-weight:400;color:#0b3656;white-space:pre;">1</div><div style="position:absolute;left:768.60px;top:908.19px;font-size:17.5px;line-height:17.5px;font-weight:400;color:#0b3656;white-space:pre;transform:scaleX(0.9759);transform-origin:0 0;">n78</div><div style="position:absolute;left:854.60px;top:908.19px;font-size:17.5px;line-height:17.5px;font-weight:400;color:#0b3656;white-space:pre;transform:scaleX(0.9467);transform-origin:0 0;">PDSCH</div><div style="position:absolute;left:1028.67px;top:908.19px;font-size:17.5px;line-height:17.5px;font-weight:400;color:#0b3656;white-space:pre;">1</div><div style="position:absolute;left:1173.93px;top:908.19px;font-size:17.5px;line-height:17.5px;font-weight:400;color:#0b3656;white-space:pre;">40</div><div style="position:absolute;left:1201.60px;top:908.19px;font-size:17.5px;line-height:17.5px;font-weight:400;color:#0b3656;white-space:pre;transform:scaleX(0.8678);transform-origin:0 0;">LOS</div><div style="position:absolute;left:1341.00px;top:908.19px;font-size:17.5px;line-height:17.5px;font-weight:400;color:#0b3656;white-space:pre;transform:scaleX(1.0101);transform-origin:0 0;">121.799079</div><div style="position:absolute;left:1458.40px;top:908.19px;font-size:17.5px;line-height:17.5px;font-weight:400;color:#0b3656;white-space:pre;transform:scaleX(1.0137);transform-origin:0 0;">9.750327</div><div style="position:absolute;left:1629.67px;top:908.19px;font-size:17.5px;line-height:17.5px;font-weight:400;color:#0b3656;white-space:pre;">8</div><div style="position:absolute;left:1734.93px;top:908.19px;font-size:17.5px;line-height:17.5px;font-weight:400;color:#0b3656;white-space:pre;">13</div><div style="position:absolute;left:94.60px;top:934.19px;font-size:17.5px;line-height:17.5px;font-weight:400;color:#0b3656;white-space:pre;">173.5</div><div style="position:absolute;left:142px;top:0;width:169px;height:986px;overflow:hidden"><div style="position:absolute;left:-142px;top:0"><div style="position:absolute;left:146.60px;top:934.19px;font-size:17.5px;line-height:17.5px;font-weight:400;color:#0b3656;white-space:pre;transform:scaleX(0.9347);transform-origin:0 0;">MACRO CELL GNB O</div></div></div><div style="position:absolute;left:315.60px;top:934.19px;font-size:17.5px;line-height:17.5px;font-weight:400;color:#0b3656;white-space:pre;transform:scaleX(0.8908);transform-origin:0 0;">UE_1</div><div style="position:absolute;left:503.10px;top:934.19px;font-size:17.5px;line-height:17.5px;font-weight:400;color:#0b3656;white-space:pre;transform:scaleX(0.9836);transform-origin:0 0;">1900</div><div style="position:absolute;left:591.50px;top:934.19px;font-size:17.5px;line-height:17.5px;font-weight:400;color:#0b3656;white-space:pre;transform:scaleX(0.8396);transform-origin:0 0;">TRUE</div><div style="position:absolute;left:750.67px;top:934.19px;font-size:17.5px;line-height:17.5px;font-weight:400;color:#0b3656;white-space:pre;">1</div><div style="position:absolute;left:768.60px;top:934.19px;font-size:17.5px;line-height:17.5px;font-weight:400;color:#0b3656;white-space:pre;transform:scaleX(0.9759);transform-origin:0 0;">n78</div><div style="position:absolute;left:854.60px;top:934.19px;font-size:17.5px;line-height:17.5px;font-weight:400;color:#0b3656;white-space:pre;transform:scaleX(0.9467);transform-origin:0 0;">PDSCH</div><div style="position:absolute;left:1028.67px;top:934.19px;font-size:17.5px;line-height:17.5px;font-weight:400;color:#0b3656;white-space:pre;">1</div><div style="position:absolute;left:1173.93px;top:934.19px;font-size:17.5px;line-height:17.5px;font-weight:400;color:#0b3656;white-space:pre;">40</div><div style="position:absolute;left:1201.60px;top:934.19px;font-size:17.5px;line-height:17.5px;font-weight:400;color:#0b3656;white-space:pre;transform:scaleX(0.8678);transform-origin:0 0;">LOS</div><div style="position:absolute;left:1341.00px;top:934.19px;font-size:17.5px;line-height:17.5px;font-weight:400;color:#0b3656;white-space:pre;transform:scaleX(1.0101);transform-origin:0 0;">121.799079</div><div style="position:absolute;left:1458.40px;top:934.19px;font-size:17.5px;line-height:17.5px;font-weight:400;color:#0b3656;white-space:pre;transform:scaleX(1.0137);transform-origin:0 0;">9.750327</div><div style="position:absolute;left:1629.67px;top:934.19px;font-size:17.5px;line-height:17.5px;font-weight:400;color:#0b3656;white-space:pre;">8</div><div style="position:absolute;left:1734.93px;top:934.19px;font-size:17.5px;line-height:17.5px;font-weight:400;color:#0b3656;white-space:pre;">13</div><div style="position:absolute;left:35px;top:199px;width:2px;height:740px;background:#107c41"></div><div style="position:absolute;left:1437.5px;top:199px;width:2.5px;height:740px;background:#107c41"></div><div style="position:absolute;left:0px;top:939px;width:1762px;height:47px;background:#f0f0f0;border-top:1px solid #dedede"></div><svg style="position:absolute;left:34px;top:953px" width="11" height="17" viewBox="0 0 11 17"><path d="M9 1.5L2 8.5l7 7" fill="none" stroke="#8a8a8a" stroke-width="1.5"/></svg><svg style="position:absolute;left:83px;top:953px" width="11" height="17" viewBox="0 0 11 17"><path d="M2 1.5l7 7-7 7" fill="none" stroke="#8a8a8a" stroke-width="1.5"/></svg><div style="position:absolute;left:166px;top:938px;width:344px;height:43px;background:#fff;border-radius:0 0 8px 8px;box-shadow:0 1px 1px rgba(0,0,0,0.10)"></div><svg style="position:absolute;left:158px;top:939px" width="8" height="8" viewBox="0 0 8 8"><path d="M8 0H0A8 8 0 0 1 8 8z" fill="#fff"/></svg><svg style="position:absolute;left:510px;top:939px" width="8" height="8" viewBox="0 0 8 8"><path d="M0 0H8A8 8 0 0 0 0 8z" fill="#fff"/></svg><div style="position:absolute;left:178.50px;top:950.07px;font-size:20px;line-height:20px;font-weight:400;color:#1a1a1a;white-space:pre;transform:scaleX(1.0084);transform-origin:0 0;">LTENR_Radio_Measurements_Log</div><div style="position:absolute;left:178px;top:974px;width:318px;height:3px;background:#107c41"></div><div style="position:absolute;left:515px;top:950px;width:1px;height:26px;background:#c8c8c8"></div><div style="position:absolute;left:537.60px;top:954.57px;font-size:20px;line-height:20px;font-weight:400;color:#242424;white-space:pre;transform:scaleX(1.0261);transform-origin:0 0;">Pivot Table(Custom)</div><div style="position:absolute;left:745px;top:950px;width:1px;height:26px;background:#c8c8c8"></div><div style="position:absolute;left:809px;top:961px;width:17px;height:1.6px;background:#333"></div><div style="position:absolute;left:816.7px;top:953.5px;width:1.6px;height:17px;background:#333"></div><div style="position:absolute;left:1155.5px;top:956px;width:3px;height:3px;background:#333"></div><div style="position:absolute;left:1155.5px;top:962px;width:3px;height:3px;background:#333"></div><div style="position:absolute;left:1155.5px;top:968px;width:3px;height:3px;background:#333"></div><div style="position:absolute;left:1181px;top:951px;width:600px;height:24px;background:#f7f7f7;border-radius:12px"></div><svg style="position:absolute;left:1189px;top:955px" width="11" height="14" viewBox="0 0 11 14"><path d="M10 0.5v13L0.5 7z" fill="#6e6e6e"/></svg><div style="position:absolute;left:1207px;top:956px;width:600px;height:12px;background:#737373;border-radius:6px"></div><div style="position:absolute;left:1762px;top:0px;width:3px;height:986px;background:#fff"></div><div style="position:absolute;left:35px;top:355px;width:1728px;height:595px;border:3px solid #e81c24"></div>
</body></html>
